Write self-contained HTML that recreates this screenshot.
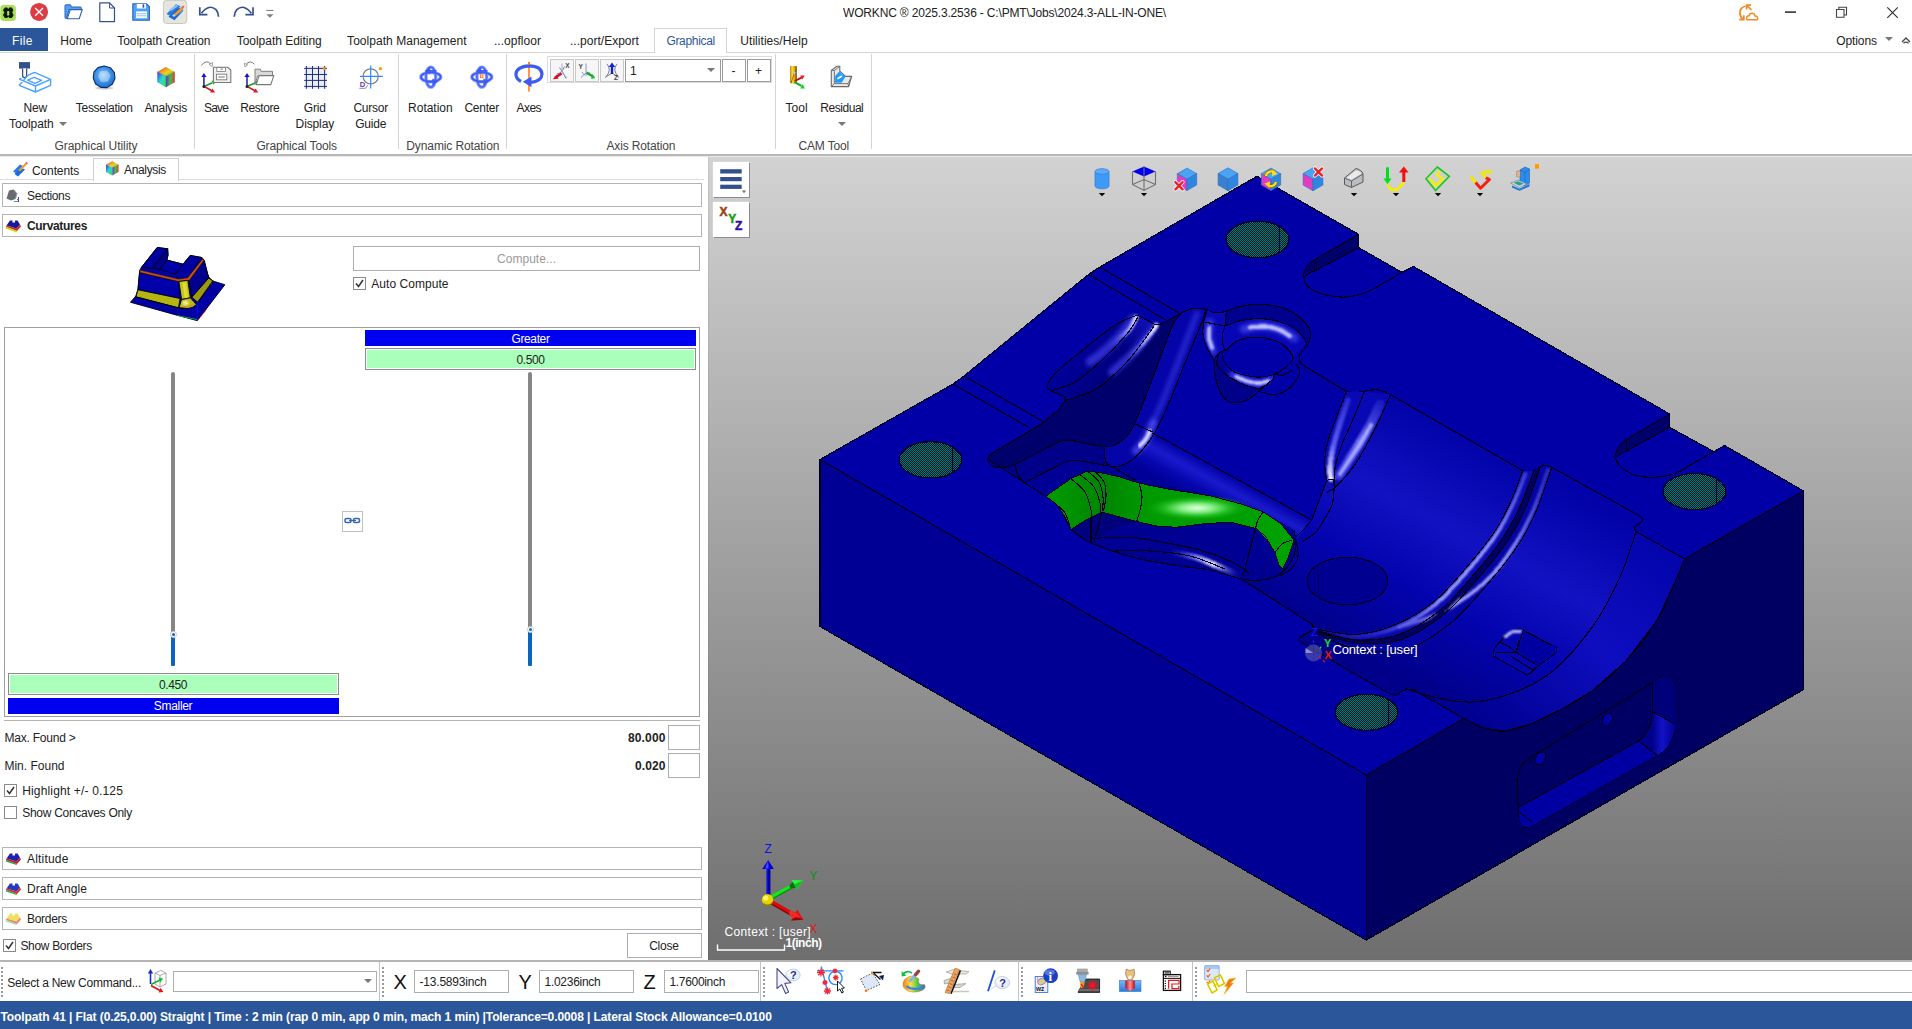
<!DOCTYPE html>
<html><head><meta charset="utf-8"><title>WORKNC</title><style>html,body{margin:0;padding:0}body{width:1912px;height:1029px;overflow:hidden;background:#fff;position:relative;font-family:"Liberation Sans",sans-serif}
.t{position:absolute;white-space:pre;font-family:"Liberation Sans",sans-serif}
.tri{position:absolute;width:0;height:0;border-left:4px solid transparent;border-right:4px solid transparent;border-top:4px solid #777}
svg{position:absolute;overflow:visible}</style></head><body>
<!-- parts.view -->
<div style="position:absolute;left:708px;top:157px;width:1204px;height:803px;background:linear-gradient(#d2d2d2,#6e6e6e)"></div>
<svg style="left:0;top:0" width="1912" height="1029" viewBox="0 0 1912 1029" shape-rendering="crispEdges">
<defs>
<pattern id="hatch" width="2" height="2" patternUnits="userSpaceOnUse"><rect width="2" height="2" fill="#000098"/><rect width="1" height="1" fill="#009000"/><rect x="1" y="1" width="1" height="1" fill="#009000"/></pattern>
<linearGradient id="gcav" gradientUnits="userSpaceOnUse" x1="1385" y1="668" x2="1503" y2="452"><stop offset="0" stop-color="#00008a"/><stop offset="0.35" stop-color="#0404b0"/><stop offset="0.62" stop-color="#1212c2"/><stop offset="1" stop-color="#0202a8"/></linearGradient>
<linearGradient id="gband" gradientUnits="userSpaceOnUse" x1="1500" y1="740" x2="1680" y2="540"><stop offset="0" stop-color="#000090"/><stop offset="0.5" stop-color="#0e0ec0"/><stop offset="1" stop-color="#0303aa"/></linearGradient>
<radialGradient id="ggreen" gradientUnits="userSpaceOnUse" cx="1197" cy="508" r="52" gradientTransform="translate(1197 508) scale(1 0.25) translate(-1197 -508)"><stop offset="0" stop-color="#e4ffe4"/><stop offset="0.3" stop-color="#8af08a"/><stop offset="0.6" stop-color="#28c028"/><stop offset="1" stop-color="#00a000" stop-opacity="0"/></radialGradient>
<linearGradient id="hl1" gradientUnits="userSpaceOnUse" x1="1347" y1="398" x2="1330" y2="478"><stop offset="0" stop-color="#2a2ad0"/><stop offset="0.6" stop-color="#5c5cf0"/><stop offset="1" stop-color="#e8e8ff"/></linearGradient>
<linearGradient id="hl2" gradientUnits="userSpaceOnUse" x1="1379" y1="402" x2="1338" y2="474"><stop offset="0" stop-color="#1c1cc4"/><stop offset="0.55" stop-color="#6868f8"/><stop offset="1" stop-color="#3a3ae0"/></linearGradient>
<linearGradient id="gsp" gradientUnits="userSpaceOnUse" x1="1070" y1="350" x2="1110" y2="385"><stop offset="0" stop-color="#0000a0"/><stop offset="0.5" stop-color="#00008c"/><stop offset="1" stop-color="#000078"/></linearGradient>
<linearGradient id="hl3" gradientUnits="userSpaceOnUse" x1="1145" y1="318" x2="1115" y2="355"><stop offset="0" stop-color="#e8e8ff"/><stop offset="0.45" stop-color="#8c8cff"/><stop offset="1" stop-color="#2020c8" stop-opacity="0.1"/></linearGradient>
<linearGradient id="hl4" gradientUnits="userSpaceOnUse" x1="1168" y1="552" x2="1240" y2="576"><stop offset="0" stop-color="#2020c8" stop-opacity="0"/><stop offset="0.35" stop-color="#7070f0"/><stop offset="0.62" stop-color="#e0e0ff"/><stop offset="1" stop-color="#3030d0" stop-opacity="0"/></linearGradient>
<linearGradient id="gshade" gradientUnits="userSpaceOnUse" x1="1050" y1="0" x2="1295" y2="0"><stop offset="0" stop-color="#000" stop-opacity="0.05"/><stop offset="0.22" stop-color="#000" stop-opacity="0.18"/><stop offset="0.4" stop-color="#000" stop-opacity="0.05"/><stop offset="1" stop-color="#000" stop-opacity="0"/></linearGradient>
<filter id="b1" x="-20%" y="-20%" width="140%" height="140%"><feGaussianBlur stdDeviation="1.1"/></filter>
<filter id="b2" x="-20%" y="-20%" width="140%" height="140%"><feGaussianBlur stdDeviation="2"/></filter>
<linearGradient id="gpk" gradientUnits="userSpaceOnUse" x1="1652" y1="0" x2="1675" y2="0"><stop offset="0" stop-color="#000088"/><stop offset="0.45" stop-color="#1212c8"/><stop offset="1" stop-color="#00008c"/></linearGradient>
<linearGradient id="gramp" gradientUnits="userSpaceOnUse" x1="1232" y1="476" x2="1214" y2="509"><stop offset="0" stop-color="#0000a6"/><stop offset="0.35" stop-color="#1a1acc"/><stop offset="0.7" stop-color="#0606ae"/><stop offset="1" stop-color="#000098"/></linearGradient>
<linearGradient id="gstrip" gradientUnits="userSpaceOnUse" x1="1148" y1="320" x2="1128" y2="350"><stop offset="0" stop-color="#1616cc" stop-opacity=".7"/><stop offset="1" stop-color="#1616cc" stop-opacity="0"/></linearGradient>
<linearGradient id="hlg" gradientUnits="userSpaceOnUse" x1="1535" y1="470" x2="1340" y2="640"><stop offset="0" stop-color="#8080ff" stop-opacity=".35"/><stop offset="0.3" stop-color="#a0a0ff" stop-opacity=".95"/><stop offset="0.6" stop-color="#a8a8ff" stop-opacity=".95"/><stop offset="0.85" stop-color="#7070f0" stop-opacity=".4"/><stop offset="1" stop-color="#5050e0" stop-opacity=".1"/></linearGradient>
<clipPath id="ringclip"><path d="M1203 311 L1226 311 Q1258 300 1300 317 L1311 335 L1307 345 L1293 357 Q1286 343 1259 337 Q1238 340 1227 350 L1222 352 L1222 360 L1232 370 L1259 377 L1274 374 V379 L1260 389 L1245 386 L1229 378 L1214 360 L1203 335Z"/></clipPath>
</defs>
<polygon points="820.0,459.5 953.0,384.0 964.0,376.0 1088.6,274.4 1099.7,267.1 1257.0,176.2 1358.7,234.4 1358.7,247.6 1402.0,272.4 1413.3,266.4 1669.6,414.0 1669.6,427.3 1713.8,451.6 1724.5,445.5 1803.6,491.0 1684.5,558.8 1676.4,579.0 1657.4,620.0 1626.0,661.0 1592.0,691.0 1563.0,708.5 1531.0,724.0 1505.0,731.0 1484.0,728.3 1463.7,718.6 1366.3,775.0" fill="#0000a6"/>
<polygon points="820.0,459.5 1366.3,775.0 1366.3,940.0 820.0,626.5" fill="#000095"/>
<polygon points="1366.3,775.0 1463.7,718.6 1484.0,728.3 1505.0,731.0 1531.0,724.0 1563.0,708.5 1592.0,691.0 1626.0,661.0 1657.4,620.0 1676.4,579.0 1684.5,558.8 1803.6,491.0 1803.6,689.5 1366.3,940.0" fill="#000062"/>
<polygon points="1346.7,391.4 1366.0,390.4 1390.4,394.7 1522.6,470.6 1533.7,471.0 1540.1,467.0 1546.0,465.3 1551.8,467.3 1640.0,516.2 1642.0,520.0 1634.0,527.0 1636.0,531.8 1685.0,559.0 1684.5,558.8 1676.4,579.0 1657.4,620.0 1626.0,661.0 1592.0,691.0 1563.0,708.5 1531.0,724.0 1505.0,731.0 1484.0,728.3 1463.7,718.6 1414.0,689.8 1406.4,689.8 1398.0,694.0 1390.8,694.3 1334.4,662.2 1306.0,645.0 1299.0,640.0 1302.4,635.6 1312.0,630.3 1313.0,625.0 1230.7,575.2 1135.0,460.8 1152.5,435.5 1311.7,520.0 1326.7,480.7 1324.6,461.6 1328.0,441.2 1336.2,418.1" fill="url(#gcav)"/>
<polygon points="1152.5,433.0 1311.7,520.0 1296.0,540.0 1280.8,523.6 1263.3,511.9 1241.9,504.2 1212.7,496.4 1169.5,489.4 1139.2,483.1 1117.7,466.6 1131.6,460.3 1144.3,447.7" fill="url(#gramp)"/>
<path d="M1636.0 531.8 C1633.3 539.3 1627.2 561.3 1620.0 577.0 C1612.8 592.7 1604.2 610.3 1593.0 626.0 C1581.8 641.7 1566.4 659.8 1553.0 671.0 C1539.6 682.2 1526.1 687.8 1512.7 693.0 C1499.3 698.2 1485.2 701.2 1472.5 702.0 C1459.8 702.8 1447.9 699.9 1436.7 697.7 C1425.5 695.5 1410.6 690.2 1405.4 688.7 L1414 689.8 L1463.7 718.6 L1463.7 718.6 C1467.1 720.2 1477.1 726.2 1484.0 728.3 C1490.9 730.4 1497.2 731.7 1505.0 731.0 C1512.8 730.3 1521.3 727.8 1531.0 724.0 C1540.7 720.2 1552.8 714.0 1563.0 708.5 C1573.2 703.0 1581.5 698.9 1592.0 691.0 C1602.5 683.1 1615.1 672.8 1626.0 661.0 C1636.9 649.2 1649.0 633.7 1657.4 620.0 C1665.8 606.3 1671.9 589.2 1676.4 579.0 C1680.9 568.8 1683.2 562.2 1684.5 558.8 L1685 559 Z" fill="url(#gband)"/>
<path d="M1636.0 531.8 C1633.3 539.3 1627.2 561.3 1620.0 577.0 C1612.8 592.7 1604.2 610.3 1593.0 626.0 C1581.8 641.7 1566.4 659.8 1553.0 671.0 C1539.6 682.2 1526.1 687.8 1512.7 693.0 C1499.3 698.2 1485.2 701.2 1472.5 702.0 C1459.8 702.8 1447.9 699.9 1436.7 697.7 C1425.5 695.5 1410.6 690.2 1405.4 688.7" stroke="#000010" stroke-width="1.1" fill="none"/>
<path d="M1463.7 718.6 C1467.1 720.2 1477.1 726.2 1484.0 728.3 C1490.9 730.4 1497.2 731.7 1505.0 731.0 C1512.8 730.3 1521.3 727.8 1531.0 724.0 C1540.7 720.2 1552.8 714.0 1563.0 708.5 C1573.2 703.0 1581.5 698.9 1592.0 691.0 C1602.5 683.1 1615.1 672.8 1626.0 661.0 C1636.9 649.2 1649.0 633.7 1657.4 620.0 C1665.8 606.3 1671.9 589.2 1676.4 579.0 C1680.9 568.8 1683.2 562.2 1684.5 558.8" stroke="#000010" stroke-width="1.1" fill="none"/>
<path d="M1305.9 366.9 L1346.7 391.4 L1346.7 391.4 C1348.1 391.6 1352.2 392.5 1355.0 392.5 C1357.8 392.5 1360.9 391.8 1363.7 391.4 C1366.5 391.0 1369.0 390.2 1372.0 390.0 C1375.0 389.8 1378.3 389.6 1381.4 390.4 C1384.5 391.2 1388.9 394.0 1390.4 394.7 L1522.6 470.6 L1522.6 470.6 C1523.5 470.8 1526.2 471.5 1528.0 471.6 C1529.8 471.7 1531.7 471.8 1533.7 471.0 C1535.7 470.2 1538.0 467.9 1540.1 467.0 C1542.1 466.1 1544.0 465.2 1546.0 465.3 C1548.0 465.4 1550.8 467.0 1551.8 467.3 L1640 516.2 L1640.0 516.2 C1640.4 516.7 1642.5 517.9 1642.5 519.0 C1642.5 520.1 1641.3 521.8 1640.0 523.0 C1638.7 524.2 1635.2 525.0 1634.5 526.5 C1633.8 528.0 1635.8 530.9 1636.0 531.8 L1685 559" stroke="#000010" stroke-width="1.1" fill="none"/>
<path d="M1334.4 662.2 L1390.8 694.3 L1390.8 694.3 C1391.8 694.4 1395.1 695.5 1397.0 695.0 C1398.9 694.5 1400.4 691.9 1402.0 691.0 C1403.6 690.1 1404.4 690.0 1406.4 689.8 C1408.4 689.6 1412.7 689.8 1414.0 689.8 L1463.7 718.6" stroke="#000010" stroke-width="1.1" fill="none"/>
<path d="M1242 579 L1313 625 L1313.0 625.0 C1312.8 625.9 1313.8 628.5 1312.0 630.3 C1310.2 632.1 1304.6 634.0 1302.4 635.6 C1300.2 637.2 1298.4 638.4 1299.0 640.0 C1299.6 641.6 1304.8 644.2 1306.0 645.0 L1334.4 662.2" stroke="#000010" stroke-width="1.1" fill="none"/>
<path d="M1346.4 391.6 C1344.7 396.0 1339.3 409.8 1336.2 418.1 C1333.1 426.4 1329.9 433.9 1328.0 441.2 C1326.1 448.4 1324.8 455.0 1324.6 461.6 C1324.4 468.2 1326.3 477.5 1326.7 480.7 L1334.1 488.8 L1334.1 488.8 C1337.6 484.7 1348.3 474.6 1355.2 464.4 C1362.1 454.2 1369.7 439.3 1375.6 427.6 C1381.5 415.9 1388.1 399.9 1390.6 394.3 L1364 392 Z" fill="#0808b4"/>
<g filter="url(#b1)"><path d="M1348.0 400.0 C1346.6 404.2 1342.1 416.7 1339.5 425.0 C1336.9 433.3 1334.1 442.8 1332.5 450.0 C1330.9 457.2 1330.2 463.2 1330.0 468.0 C1329.8 472.8 1330.8 477.2 1331.0 479.0" stroke="url(#hl1)" stroke-width="5.5" fill="none" stroke-linecap="round"/><path d="M1380.0 404.0 C1378.3 407.5 1373.5 418.3 1370.0 425.0 C1366.5 431.7 1362.7 437.9 1359.0 444.0 C1355.3 450.1 1351.3 456.3 1348.0 461.6 C1344.7 466.9 1340.5 473.6 1339.0 476.0" stroke="url(#hl2)" stroke-width="9" fill="none" stroke-linecap="round"/></g>
<g filter="url(#b1)"><path d="M1371.0 425.0 C1369.2 428.2 1363.8 437.8 1360.0 444.0 C1356.2 450.2 1351.3 457.0 1348.0 462.0 C1344.7 467.0 1341.3 472.0 1340.0 474.0" stroke="#c4c4ff" stroke-opacity=".8" stroke-width="3.4" fill="none" stroke-linecap="round"/></g>
<path d="M1346.4 391.6 C1344.7 396.0 1339.3 409.8 1336.2 418.1 C1333.1 426.4 1329.9 433.9 1328.0 441.2 C1326.1 448.4 1324.8 455.0 1324.6 461.6 C1324.4 468.2 1326.3 477.5 1326.7 480.7" stroke="#000010" stroke-width="1.1" fill="none"/><path d="M1364.1 392.2 C1362.2 397.0 1356.2 411.9 1352.5 420.8 C1348.8 429.7 1344.5 437.1 1341.6 445.3 C1338.6 453.5 1336.0 462.6 1334.8 469.8 C1333.5 477.1 1334.2 485.6 1334.1 488.8" stroke="#000010" stroke-width="1.1" fill="none"/><path d="M1390.6 394.3 C1388.1 399.9 1381.5 415.9 1375.6 427.6 C1369.7 439.3 1362.1 454.2 1355.2 464.4 C1348.3 474.6 1337.6 484.7 1334.1 488.8" stroke="#000010" stroke-width="1.1" fill="none"/>
<path d="M1326.7 480.7 L1311.7 520 M1334.1 488.8 L1334.1 488.8 C1333.8 491.5 1333.7 499.8 1332.0 505.0 C1330.3 510.2 1325.3 517.5 1324.0 520.0 M1326.7 480.7 Q1331 478 1334.5 480 M1327 493 Q1331 489 1334.1 488.8 M1334.1 469 V489" stroke="#000010" stroke-width="1.1" fill="none"/>
<path d="M1522.6 471.0 C1520.7 476.1 1515.7 491.2 1511.0 501.3 C1506.3 511.4 1501.6 521.1 1494.6 531.6 C1487.6 542.1 1479.0 552.8 1469.0 564.4 C1459.0 576.0 1446.7 591.3 1434.4 601.4 C1422.2 611.5 1408.5 619.2 1395.5 624.7 C1382.5 630.2 1369.5 633.6 1356.6 634.4 C1343.6 635.2 1324.3 630.3 1317.8 629.5 L1317.6 631.0 L1317.6 631.0 C1324.2 632.6 1343.3 639.6 1357.0 640.1 C1370.6 640.6 1385.6 639.4 1399.6 634.3 C1413.6 629.2 1428.1 620.0 1441.0 609.4 C1453.9 598.9 1466.5 583.2 1476.9 571.2 C1487.3 559.2 1496.0 548.3 1503.3 537.4 C1510.5 526.4 1515.4 516.7 1520.4 505.7 C1525.5 494.6 1531.5 476.8 1533.7 471.0 Z" fill="#0a0ab4"/>
<path d="M1533.7 471.0 C1531.5 476.8 1525.5 494.6 1520.4 505.7 C1515.4 516.7 1510.5 526.4 1503.3 537.4 C1496.0 548.3 1487.3 559.2 1476.9 571.2 C1466.5 583.2 1453.9 598.9 1441.0 609.4 C1428.1 620.0 1413.6 629.2 1399.6 634.3 C1385.6 639.4 1370.6 640.6 1357.0 640.1 C1343.3 639.6 1324.2 632.6 1317.6 631.0 L1317.5 631.9 L1317.5 631.9 C1324.1 633.8 1343.1 641.9 1357.1 643.2 C1371.2 644.4 1387.2 644.3 1401.7 639.4 C1416.3 634.5 1431.3 624.5 1444.5 613.8 C1457.8 603.0 1470.6 587.1 1481.1 574.8 C1491.7 562.6 1500.5 551.6 1507.9 540.5 C1515.3 529.3 1520.2 520.2 1525.5 508.0 C1530.9 495.8 1537.7 474.1 1540.1 467.3 Z" fill="#00007c"/>
<path d="M1540.1 467.3 C1537.7 474.1 1530.9 495.8 1525.5 508.0 C1520.2 520.2 1515.3 529.3 1507.9 540.5 C1500.5 551.6 1491.7 562.6 1481.1 574.8 C1470.6 587.1 1457.8 603.0 1444.5 613.8 C1431.3 624.5 1416.3 634.5 1401.7 639.4 C1387.2 644.3 1371.2 644.4 1357.1 643.2 C1343.1 641.9 1324.1 633.8 1317.5 631.9 L1317.3 633.5 L1317.3 633.5 C1324.0 636.1 1342.7 646.5 1357.5 649.2 C1372.3 651.9 1390.4 654.0 1406.0 649.6 C1421.7 645.1 1437.6 633.5 1451.5 622.3 C1465.4 611.0 1478.5 594.7 1489.4 582.0 C1500.4 569.4 1509.4 558.1 1517.1 546.6 C1524.8 535.0 1529.7 525.8 1535.5 512.6 C1541.3 499.4 1549.1 474.9 1551.8 467.3 Z" fill="#0404a4"/>
<g filter="url(#b1)"><path d="M1526.0 472.5 C1524.0 477.5 1518.5 492.4 1513.7 502.6 C1508.9 512.7 1504.2 522.6 1497.1 533.3 C1490.0 543.9 1481.4 554.6 1471.3 566.4 C1461.1 578.1 1448.7 593.5 1436.3 603.7 C1423.9 613.9 1409.9 622.1 1396.7 627.5 C1383.4 632.8 1369.9 635.6 1356.7 636.0 C1343.5 636.5 1324.2 631.0 1317.7 629.9" stroke="url(#hlg)" stroke-width="3.6" fill="none"/><path d="M1548.5 468.5 C1545.9 475.6 1538.4 498.6 1532.8 511.4 C1527.1 524.1 1522.2 533.4 1514.6 544.9 C1507.0 556.3 1499.1 569.0 1487.2 580.1 C1475.2 591.2 1457.7 603.7 1442.8 611.6 C1427.8 619.6 1404.9 625.1 1397.3 627.8" stroke="url(#hlg)" stroke-width="3.6" fill="none"/><path d="M1537.0 470.0 C1534.6 476.1 1528.1 495.3 1522.8 506.8 C1517.5 518.2 1512.7 527.8 1505.4 538.8 C1498.1 549.8 1489.3 560.8 1478.8 572.9 C1468.4 585.0 1455.7 600.8 1442.6 611.5 C1429.6 622.1 1414.8 631.7 1400.6 636.7 C1386.3 641.7 1370.9 642.4 1357.0 641.5 C1343.2 640.7 1324.1 633.1 1317.6 631.4" stroke="#000060" stroke-width="5" fill="none"/></g>
<path d="M1522.6 471.0 C1520.7 476.1 1515.7 491.2 1511.0 501.3 C1506.3 511.4 1501.6 521.1 1494.6 531.6 C1487.6 542.1 1479.0 552.8 1469.0 564.4 C1459.0 576.0 1446.7 591.3 1434.4 601.4 C1422.2 611.5 1408.5 619.2 1395.5 624.7 C1382.5 630.2 1369.5 633.6 1356.6 634.4 C1343.6 635.2 1324.3 630.3 1317.8 629.5" stroke="#000010" stroke-width="1.1" fill="none"/><path d="M1533.7 471.0 C1531.5 476.8 1525.5 494.6 1520.4 505.7 C1515.4 516.7 1510.5 526.4 1503.3 537.4 C1496.0 548.3 1487.3 559.2 1476.9 571.2 C1466.5 583.2 1453.9 598.9 1441.0 609.4 C1428.1 620.0 1413.6 629.2 1399.6 634.3 C1385.6 639.4 1370.6 640.6 1357.0 640.1 C1343.3 639.6 1324.2 632.6 1317.6 631.0" stroke="#000010" stroke-width="1.1" fill="none"/><path d="M1540.1 467.3 C1537.7 474.1 1530.9 495.8 1525.5 508.0 C1520.2 520.2 1515.3 529.3 1507.9 540.5 C1500.5 551.6 1491.7 562.6 1481.1 574.8 C1470.6 587.1 1457.8 603.0 1444.5 613.8 C1431.3 624.5 1416.3 634.5 1401.7 639.4 C1387.2 644.3 1371.2 644.4 1357.1 643.2 C1343.1 641.9 1324.1 633.8 1317.5 631.9" stroke="#000010" stroke-width="1.1" fill="none"/><path d="M1551.8 467.3 C1549.1 474.9 1541.3 499.4 1535.5 512.6 C1529.7 525.8 1524.8 535.0 1517.1 546.6 C1509.4 558.1 1500.4 569.4 1489.4 582.0 C1478.5 594.7 1465.4 611.0 1451.5 622.3 C1437.6 633.5 1421.7 645.1 1406.0 649.6 C1390.4 654.0 1372.3 651.9 1357.5 649.2 C1342.7 646.5 1324.0 636.1 1317.3 633.5" stroke="#000010" stroke-width="1.1" fill="none"/>
<ellipse cx="1347.5" cy="581" rx="40.5" ry="23.8" fill="#000090" stroke="#000010" stroke-width="1"/>
<path d="M1318 565 V598" stroke="#000050" stroke-width="1"/>
<path d="M1493.8 656.4 C1493.8 655.4 1492.8 652.9 1493.8 650.5 C1494.8 648.1 1497.1 644.7 1499.7 641.8 C1502.3 638.9 1505.9 635.1 1509.4 633.0 C1513.0 630.9 1518.4 629.5 1521.0 629.2 C1523.6 628.9 1524.3 630.8 1525.0 631.1 L1557 647.6 L1556 652.5 L1536.6 667.1 L1530.8 672.9 L1526.9 674.8 Z" fill="#0505ae" stroke="#000010" stroke-width="1"/>
<polygon points="1525.0,631.1 1557.0,647.6 1538.6,666.1 1516.0,652.5" fill="#0000a0"/>
<path d="M1505.0 637.0 C1506.2 636.2 1509.3 633.0 1512.0 632.0 C1514.7 631.0 1519.5 631.2 1521.0 631.0" stroke="#c0c0ff" stroke-width="3" fill="none" stroke-linecap="round" filter="url(#b1)"/>
<path d="M1523 631 L1516 652.5 L1495.5 652.5 M1516 652.5 L1509 646.5 L1500 642 M1516 652.5 L1538.6 666.1 M1511 656.5 L1533 670 M1525 631.1 L1552 645.5 M1516 652.5 L1519 640" stroke="#000010" stroke-width="1.1" fill="none"/>
<path d="M964 376 L1043 421.5 M1099.7 267.1 L1179 312.9 M1088.6 274.4 L1166.5 320.4 M953 384 L1029 427.5" stroke="#000010" stroke-width="1.1" fill="none"/>
<polygon points="1169.0,319.9 1154.4,325.7 1127.2,361.6 1096.1,388.9 1065.0,400.5 1059.1,409.3 1041.6,423.9 992.0,453.4 987.6,459.1 992.6,466.0 1005.3,467.3 1015.4,464.1 1058.3,442.0 1068.5,440.1 1103.8,446.4 1119.0,442.6 1131.0,430.6 1142.7,404.4 1154.4,373.3 1166.1,342.2 1173.8,322.8 1181.6,313.0" fill="#00006c"/>
<path d="M1136.0 315.6 C1131.6 316.9 1123.8 319.4 1115.5 324.7 C1107.2 329.9 1096.1 339.3 1086.4 347.1 C1076.7 354.9 1063.7 365.1 1057.2 371.4 C1050.7 377.7 1048.5 381.7 1047.5 385.0 C1046.5 388.3 1048.5 388.9 1051.4 391.0 C1054.3 393.1 1057.5 398.0 1065.0 397.6 C1072.5 397.2 1085.7 394.9 1096.1 388.9 C1106.5 382.9 1117.5 372.1 1127.2 361.6 C1136.9 351.1 1149.6 331.9 1154.4 325.7 C1159.2 319.5 1158.4 326.2 1156.3 324.7 C1154.2 323.2 1145.2 318.4 1141.8 316.9 C1138.4 315.4 1140.4 314.3 1136.0 315.6Z" fill="url(#gsp)"/>
<g filter="url(#b2)"><path d="M1133.0 319.0 C1131.5 321.0 1128.2 326.2 1124.0 331.0 C1119.8 335.8 1113.7 342.8 1108.0 348.0 C1102.3 353.2 1093.0 359.7 1090.0 362.0" stroke="#3a3ae0" stroke-width="9" fill="none" stroke-linecap="round" stroke-opacity=".8"/><path d="M1154.0 327.0 C1152.5 329.0 1149.0 334.2 1145.0 339.0 C1141.0 343.8 1135.5 350.5 1130.0 356.0 C1124.5 361.5 1115.0 369.3 1112.0 372.0" stroke="#3a3ae0" stroke-width="8" fill="none" stroke-linecap="round" stroke-opacity=".8"/></g>
<g filter="url(#b1)"><path d="M1136.0 317.5 C1134.8 319.6 1131.8 326.5 1129.0 330.0 C1126.2 333.5 1122.9 335.5 1119.4 338.7 C1115.9 341.9 1109.9 347.3 1108.0 349.0" stroke="url(#hl3)" stroke-width="5" fill="none" stroke-linecap="round"/><path d="M1156.5 325.5 C1154.8 327.7 1149.8 334.6 1146.5 338.7 C1143.2 342.8 1140.4 346.3 1137.0 350.0 C1133.6 353.7 1127.8 359.2 1126.0 361.0" stroke="url(#hl3)" stroke-width="4.6" fill="none" stroke-linecap="round"/></g>
<polygon points="1141.5,318.0 1154.0,325.0 1136.0,350.0 1120.0,350.0" fill="url(#gstrip)"/>
<path d="M1136.0 315.6 C1132.6 317.1 1123.8 319.4 1115.5 324.7 C1107.2 329.9 1096.1 339.3 1086.4 347.1 C1076.7 354.9 1063.7 365.1 1057.2 371.4 C1050.7 377.7 1048.5 381.7 1047.5 385.0 C1046.5 388.3 1048.5 388.9 1051.4 391.0 C1054.3 393.1 1063.7 394.6 1065.0 397.6 C1066.3 400.7 1060.1 407.4 1059.1 409.3" stroke="#000010" stroke-width="1.1" fill="none"/><path d="M1136.0 315.6 C1137.0 315.8 1138.4 315.4 1141.8 316.9 C1145.2 318.4 1151.8 324.2 1156.3 324.7 C1160.8 325.2 1166.9 320.7 1169.0 319.9" stroke="#000010" stroke-width="1.1" fill="none"/>
<path d="M1138.0 317.0 C1136.2 319.8 1133.3 326.5 1127.0 334.0 C1120.7 341.5 1108.7 354.0 1100.0 362.0 C1091.3 370.0 1083.2 377.2 1075.0 382.0 C1066.8 386.8 1055.0 389.5 1051.0 391.0" stroke="#000010" stroke-width="1.1" fill="none"/>
<path d="M1154.4 325.7 C1149.9 331.7 1136.9 351.1 1127.2 361.6 C1117.5 372.1 1106.5 382.4 1096.1 388.9 C1085.7 395.4 1070.2 398.6 1065.0 400.5" stroke="#000010" stroke-width="1.1" fill="none"/>
<polygon points="1181.6,313.0 1193.3,308.2 1205.9,309.2 1201.0,324.7 1185.5,361.6 1170.0,400.5 1156.3,429.7 1144.3,447.7 1131.6,460.3 1117.7,466.6 1108.9,465.4 1105.1,459.0 1104.5,447.7 1119.0,442.6 1131.0,430.6 1142.7,404.4 1154.4,373.3 1166.1,342.2 1173.8,322.8" fill="#0404a8"/>
<g filter="url(#b2)"><path d="M1197.0 314.0 C1194.3 320.8 1186.5 341.0 1181.0 355.0 C1175.5 369.0 1168.8 386.5 1164.0 398.0 C1159.2 409.5 1154.0 419.7 1152.0 424.0" stroke="#2a2ad4" stroke-width="6" stroke-opacity=".8" fill="none" stroke-linecap="round"/><path d="M1153.0 423.0 C1151.8 425.7 1148.8 434.3 1146.0 439.0 C1143.2 443.7 1137.7 449.0 1136.0 451.0" stroke="#5050f0" stroke-width="8" stroke-opacity=".75" fill="none" stroke-linecap="round"/></g>
<g filter="url(#b1)"><path d="M1150.0 431.0 C1149.3 432.3 1147.7 436.5 1146.0 439.0 C1144.3 441.5 1141.0 444.8 1140.0 446.0" stroke="#d0d0ff" stroke-width="4.2" fill="none" stroke-linecap="round"/></g>
<polygon points="987.6,459.1 992.6,466.0 1005.3,467.3 1015.4,464.1 1058.3,442.0 1068.5,440.1 1103.8,446.4 1105.1,459.0 1108.9,465.4 1073.5,460.3 1063.4,462.9 1024.2,482.9" fill="#000088"/>
<polygon points="1024.2,482.9 1063.4,462.9 1073.5,460.3 1108.9,466.0 1117.7,466.6 1139.2,483.1 1119.0,476.8 1097.5,472.3 1087.4,471.1 1071.0,478.6 1045.7,496.3" fill="#000096"/>
<path d="M1059.1 409.3 L1041.6 423.9 L992.0 453.4 L992.0 453.4 C991.3 454.3 987.5 457.0 987.6 459.1 C987.7 461.2 989.7 464.6 992.6 466.0 C995.5 467.4 1001.5 467.6 1005.3 467.3 C1009.1 467.0 1013.7 464.6 1015.4 464.1 L1058.3 442 L1058.3 442.0 C1060.0 441.7 1060.9 439.4 1068.5 440.1 C1076.1 440.8 1095.4 446.0 1103.8 446.4 C1112.2 446.8 1114.5 445.2 1119.0 442.6 C1123.5 440.0 1127.0 437.0 1131.0 430.6 C1135.0 424.2 1138.8 413.9 1142.7 404.4 C1146.6 394.8 1150.5 383.7 1154.4 373.3 C1158.3 362.9 1162.9 350.6 1166.1 342.2 C1169.3 333.8 1171.2 327.7 1173.8 322.8 C1176.4 317.9 1180.3 314.6 1181.6 313.0" stroke="#000010" stroke-width="1.1" fill="none"/>
<path d="M1169.0 319.9 C1171.1 318.8 1177.5 314.9 1181.6 313.0 C1185.6 311.1 1189.2 308.8 1193.3 308.2 C1197.3 307.6 1203.8 309.0 1205.9 309.2 L1205.9 309.2 C1205.1 311.8 1204.4 316.0 1201.0 324.7 C1197.6 333.4 1190.7 349.0 1185.5 361.6 C1180.3 374.2 1174.9 389.1 1170.0 400.5 C1165.1 411.9 1160.6 421.8 1156.3 429.7 C1152.0 437.6 1148.4 442.6 1144.3 447.7 C1140.2 452.8 1136.0 457.1 1131.6 460.3 C1127.2 463.5 1121.5 465.8 1117.7 466.6 C1113.9 467.5 1111.0 466.7 1108.9 465.4 C1106.8 464.1 1105.8 461.9 1105.1 459.0 C1104.4 456.1 1104.6 449.6 1104.5 447.7" stroke="#000010" stroke-width="1.1" fill="none"/>
<path d="M1135 423.9 L1152.5 432 M987.6 459.1 L1045.7 496.3 M1015.4 464.7 C1015.6 465.9 1015.8 469.4 1016.6 471.7 C1017.4 474.0 1019.1 476.7 1020.4 478.6 C1021.7 480.5 1023.6 482.2 1024.2 482.9 M1024.2 482.9 L1063.4 462.9 L1063.4 462.9 C1065.1 462.5 1065.9 459.8 1073.5 460.3 C1081.1 460.8 1102.2 464.7 1108.9 466.0 C1115.7 467.3 1109.6 465.7 1114.0 468.0 C1118.4 470.3 1131.8 478.0 1135.4 480.0 M1152.5 433 L1311.7 520" stroke="#000010" stroke-width="1.1" fill="none"/>
<path d="M1045.7 496.3 C1047.4 497.5 1053.1 500.7 1055.8 503.3 C1058.5 505.9 1059.5 507.8 1062.1 512.1 C1064.7 516.4 1068.4 525.0 1071.6 529.2 C1074.8 533.4 1077.7 535.1 1081.0 537.4 C1084.3 539.7 1087.0 541.2 1091.2 543.1 C1095.4 545.0 1101.8 547.1 1106.4 548.8 C1111.0 550.5 1112.7 551.3 1119.0 553.2 C1125.3 555.1 1134.1 557.9 1144.3 560.0 C1154.5 562.1 1169.0 564.3 1180.0 566.0 C1191.0 567.7 1199.7 567.8 1210.0 570.0 C1220.3 572.2 1233.3 577.3 1242.0 579.0 C1250.7 580.7 1255.7 580.8 1262.0 580.0 C1268.3 579.2 1275.0 577.3 1280.0 574.0 C1285.0 570.7 1289.3 564.8 1292.0 560.0 C1294.7 555.2 1295.7 550.0 1296.0 545.0 C1296.3 540.0 1294.3 532.5 1294.0 530.0 L1263 512 L1200 493 L1139 483 L1087 471 Z" fill="#000090"/>
<polygon points="1071.6,529.2 1079.8,523.5 1091.2,517.2 1101.9,512.1 1136.7,521.6 1156.9,526.0 1175.9,527.3 1208.8,523.2 1232.2,522.6 1255.5,528.5 1267.1,539.1 1274.9,552.8 1265.0,566.0 1240.0,572.0 1200.0,562.0 1144.3,556.0 1106.4,546.0 1085.0,538.0" fill="#000092"/>
<polygon points="1071.6,529.2 1079.8,523.5 1091.2,517.2 1101.9,512.1 1136.7,521.6 1110.0,530.0 1094.0,541.0 1081.0,537.4" fill="#00007c"/>
<path d="M1168.0 551.5 C1172.5 552.4 1187.3 554.8 1195.0 557.0 C1202.7 559.2 1206.5 561.3 1214.0 564.5 C1221.5 567.7 1235.7 574.1 1240.0 576.0" stroke="url(#hl4)" stroke-width="6" fill="none" stroke-linecap="round" filter="url(#b1)"/>
<path d="M1045.7 496.3 C1047.4 497.5 1053.1 500.7 1055.8 503.3 C1058.5 505.9 1059.5 507.8 1062.1 512.1 C1064.7 516.4 1068.4 525.0 1071.6 529.2 C1074.8 533.4 1077.7 535.1 1081.0 537.4 C1084.3 539.7 1087.0 541.2 1091.2 543.1 C1095.4 545.0 1101.8 547.1 1106.4 548.8 C1111.0 550.5 1112.7 551.3 1119.0 553.2 C1125.3 555.1 1134.1 557.9 1144.3 560.0 C1154.5 562.1 1169.0 564.3 1180.0 566.0 C1191.0 567.7 1199.7 567.8 1210.0 570.0 C1220.3 572.2 1233.3 577.3 1242.0 579.0 C1250.7 580.7 1255.7 580.8 1262.0 580.0 C1268.3 579.2 1275.0 577.3 1280.0 574.0 C1285.0 570.7 1289.3 564.8 1292.0 560.0 C1294.7 555.2 1295.7 550.0 1296.0 545.0 C1296.3 540.0 1294.3 532.5 1294.0 530.0" stroke="#000010" stroke-width="1.1" fill="none"/>
<path d="M1096.3 538.7 C1098.0 538.5 1100.5 537.6 1106.4 537.4 C1112.3 537.2 1123.2 536.8 1131.6 537.4 C1140.0 538.0 1145.6 539.1 1157.0 541.2 C1168.4 543.3 1187.5 546.5 1200.0 550.0 C1212.5 553.5 1223.7 558.0 1232.0 562.0 C1240.3 566.0 1247.0 572.0 1250.0 574.0" stroke="#000010" stroke-width="1.1" fill="none"/>
<path d="M1115.0 551.0 C1120.8 551.0 1137.5 550.2 1150.0 551.0 C1162.5 551.8 1177.5 553.0 1190.0 556.0 C1202.5 559.0 1219.2 566.8 1225.0 569.0" stroke="#000010" stroke-width="1.1" fill="none"/>
<path d="M1091 517 V543 M1102 512 L1094 542 M1255.5 528.5 L1243 576" stroke="#000010" stroke-width="1.1" fill="none"/>
<polygon points="1045.7,496.3 1071.0,478.6 1087.4,471.1 1097.5,472.3 1119.0,476.8 1139.2,483.1 1169.5,489.4 1212.7,496.4 1241.9,504.2 1263.3,511.9 1280.8,523.6 1294.0,540.1 1288.5,556.6 1282.7,569.3 1278.8,564.4 1274.9,552.8 1267.1,539.1 1255.5,528.5 1232.2,522.6 1208.8,523.2 1175.9,527.3 1156.9,526.0 1136.7,521.6 1101.9,512.1 1091.2,517.2 1079.8,523.5 1071.6,529.2 1068.5,523.5 1062.1,512.1 1055.8,503.3" fill="#00a200"/>
<polygon points="1045.7,496.3 1071.0,478.6 1087.4,471.1 1097.5,472.3 1119.0,476.8 1139.2,483.1 1169.5,489.4 1212.7,496.4 1241.9,504.2 1263.3,511.9 1280.8,523.6 1294.0,540.1 1288.5,556.6 1282.7,569.3 1278.8,564.4 1274.9,552.8 1267.1,539.1 1255.5,528.5 1232.2,522.6 1208.8,523.2 1175.9,527.3 1156.9,526.0 1136.7,521.6 1101.9,512.1 1091.2,517.2 1079.8,523.5 1071.6,529.2 1068.5,523.5 1062.1,512.1 1055.8,503.3" fill="url(#gshade)"/>
<ellipse cx="1197" cy="508" rx="52" ry="13" fill="url(#ggreen)"/>
<path d="M1071.0 478.6 C1073.3 480.8 1081.7 486.8 1085.0 492.0 C1088.3 497.2 1090.0 505.8 1091.0 510.0 C1092.0 514.2 1091.2 516.0 1091.2 517.2 M1080.0 474.5 C1082.3 476.6 1090.7 482.2 1094.0 487.0 C1097.3 491.8 1098.8 498.8 1100.0 503.0 C1101.2 507.2 1100.8 510.5 1101.0 512.0 M1088.0 471.5 C1089.8 473.2 1096.5 477.8 1099.0 482.0 C1101.5 486.2 1102.4 492.2 1103.0 497.0 C1103.6 501.8 1102.6 508.7 1102.5 511.0 M1096.0 472.3 C1097.3 473.9 1102.3 478.1 1104.0 482.0 C1105.7 485.9 1106.1 491.2 1106.0 496.0 C1105.9 500.8 1103.9 508.5 1103.5 511.0 M1139.2 483.1 C1139.7 485.4 1141.9 492.5 1142.0 497.0 C1142.1 501.5 1140.9 505.9 1140.0 510.0 C1139.1 514.1 1137.2 519.7 1136.7 521.6 M1263.3 511.9 C1262.4 513.2 1259.3 517.2 1258.0 520.0 C1256.7 522.8 1255.9 527.1 1255.5 528.5 M1057.0 505.0 C1058.3 506.3 1062.8 509.5 1065.0 513.0 C1067.2 516.5 1069.2 523.8 1070.0 526.0" stroke="#000010" stroke-width="1.1" fill="none"/>
<polygon points="1045.7,496.3 1071.0,478.6 1087.4,471.1 1097.5,472.3 1119.0,476.8 1139.2,483.1 1169.5,489.4 1212.7,496.4 1241.9,504.2 1263.3,511.9 1280.8,523.6 1294.0,540.1 1288.5,556.6 1282.7,569.3 1278.8,564.4 1274.9,552.8 1267.1,539.1 1255.5,528.5 1232.2,522.6 1208.8,523.2 1175.9,527.3 1156.9,526.0 1136.7,521.6 1101.9,512.1 1091.2,517.2 1079.8,523.5 1071.6,529.2 1068.5,523.5 1062.1,512.1 1055.8,503.3" fill="none" stroke="#000010" stroke-width="0.9"/>
<path d="M1274.9 552.8 C1276.1 551.3 1279.2 546.1 1282.0 544.0 C1284.8 541.9 1290.3 540.7 1292.0 540.0 M1296.0 540.0 C1296.3 542.7 1298.7 551.3 1298.0 556.0 C1297.3 560.7 1295.0 564.7 1292.0 568.0 C1289.0 571.3 1282.0 574.7 1280.0 576.0 M1311.7 520 L1311.7 520.0 C1310.4 521.5 1306.6 526.2 1304.0 529.0 C1301.4 531.8 1297.3 535.7 1296.0 537.0 M1324 520 L1324.0 520.0 C1322.7 522.0 1319.7 528.3 1316.0 532.0 C1312.3 535.7 1304.3 540.3 1302.0 542.0" stroke="#000010" stroke-width="1.1" fill="none"/>
<path d="M1226.3 311.1 C1228.8 310.3 1235.8 307.4 1241.2 306.3 C1246.6 305.2 1252.1 304.1 1258.9 304.3 C1265.7 304.5 1275.2 305.6 1282.0 307.7 C1288.8 309.8 1295.2 313.8 1299.7 317.2 C1304.2 320.6 1307.5 325.2 1309.3 328.1 C1311.1 331.1 1310.8 332.2 1310.6 334.9 C1310.4 337.6 1308.4 342.8 1307.9 344.4 L1306.5 343 L1306.5 343.0 C1305.8 341.9 1304.7 338.9 1302.4 336.3 C1300.1 333.7 1297.0 329.9 1292.9 327.4 C1288.8 324.9 1283.7 322.8 1278.0 321.3 C1272.3 319.8 1265.0 318.7 1258.9 318.6 C1252.8 318.5 1246.9 319.4 1241.2 320.6 C1235.5 321.8 1227.6 325.1 1224.9 326.0 Z" fill="#00008e"/>
<path d="M1224.9 326.0 C1227.6 325.1 1235.5 321.8 1241.2 320.6 C1246.9 319.4 1252.8 318.5 1258.9 318.6 C1265.0 318.7 1272.3 319.8 1278.0 321.3 C1283.7 322.8 1288.8 324.9 1292.9 327.4 C1297.0 329.9 1300.1 333.7 1302.4 336.3 C1304.7 338.9 1305.8 341.9 1306.5 343.0 L1292.9 356.7 L1292.9 356.7 C1291.4 354.6 1289.7 347.2 1284.0 344.0 C1278.3 340.8 1266.6 337.9 1258.9 337.3 C1251.2 336.7 1243.3 338.4 1238.0 340.5 C1232.7 342.6 1228.8 348.3 1226.9 349.9 L1224.9 350.5 L1222.2 334.9 Z" fill="#0606b4"/>
<path d="M1207.2 310.4 C1206.6 312.2 1204.5 317.2 1203.8 321.3 C1203.1 325.4 1202.6 330.6 1203.1 334.9 C1203.5 339.2 1204.7 343.0 1206.5 347.1 C1208.3 351.2 1212.8 357.3 1214.0 359.4 L1219.5 352.6 L1224.9 350.5 L1224.9 350.5 C1224.6 349.5 1223.4 347.0 1222.9 344.4 C1222.5 341.8 1221.9 338.0 1222.2 334.9 C1222.5 331.8 1224.2 330.0 1224.9 326.0 C1225.6 322.0 1226.1 313.6 1226.3 311.1 L1213.9 312.5 Z" fill="#0808b8"/>
<path d="M1214.0 359.4 C1214.2 362.3 1214.3 371.4 1215.4 377.1 C1216.5 382.8 1218.8 389.4 1220.8 393.4 C1222.8 397.4 1225.1 399.3 1227.6 400.9 C1230.1 402.5 1232.8 402.9 1235.8 402.9 C1238.8 402.9 1242.1 402.2 1245.3 400.9 C1248.5 399.5 1250.0 398.6 1254.8 394.8 C1259.6 391.1 1270.7 381.1 1273.9 378.4 L1273.9 378.4 C1271.6 380.0 1265.1 386.9 1260.3 388.0 C1255.5 389.1 1250.5 387.0 1245.3 385.2 C1240.1 383.4 1233.3 381.3 1229.0 377.1 C1224.7 372.9 1221.1 362.9 1219.5 360.0 Z" fill="#000088"/>
<path d="M1229.0 377.1 C1231.7 378.5 1240.1 383.4 1245.3 385.2 C1250.5 387.0 1255.5 389.1 1260.3 388.0 C1265.1 386.9 1271.6 380.0 1273.9 378.4 L1273.9 374.4 L1273.9 374.4 C1271.4 374.8 1264.4 377.1 1258.9 377.1 C1253.5 377.1 1245.7 375.5 1241.2 374.4 C1236.7 373.3 1233.3 371.0 1231.7 370.3 Z" fill="#0a0abc"/>
<g filter="url(#b2)" clip-path="url(#ringclip)"><path d="M1244.0 329.0 C1247.0 328.5 1256.0 325.9 1262.0 326.0 C1268.0 326.1 1274.7 327.5 1280.0 329.5 C1285.3 331.5 1291.7 336.6 1294.0 338.0" stroke="#4040ec" stroke-width="8" fill="none" stroke-linecap="round" stroke-opacity=".85"/><path d="M1210.0 322.0 C1209.8 324.7 1208.5 333.0 1209.0 338.0 C1209.5 343.0 1212.3 349.7 1213.0 352.0" stroke="#4040ec" stroke-width="7" fill="none" stroke-linecap="round" stroke-opacity=".85"/><path d="M1232.0 374.5 C1234.7 375.7 1243.0 380.0 1248.0 381.5 C1253.0 383.0 1258.0 383.8 1262.0 383.5 C1266.0 383.2 1270.3 380.2 1272.0 379.5" stroke="#4040ec" stroke-width="6" fill="none" stroke-linecap="round" stroke-opacity=".85"/></g>
<g filter="url(#b1)"><path d="M1250.0 327.5 C1252.7 327.3 1261.0 326.1 1266.0 326.5 C1271.0 326.9 1276.0 328.4 1280.0 330.0 C1284.0 331.6 1288.3 335.0 1290.0 336.0" stroke="#c0c0ff" stroke-width="4.2" fill="none" stroke-linecap="round"/><path d="M1209.5 328.0 C1209.4 329.7 1208.6 334.7 1209.0 338.0 C1209.4 341.3 1211.5 346.3 1212.0 348.0" stroke="#b8b8ff" stroke-width="4" fill="none" stroke-linecap="round"/><path d="M1236.0 376.5 C1238.0 377.3 1244.0 380.4 1248.0 381.5 C1252.0 382.6 1256.7 383.1 1260.0 383.0 C1263.3 382.9 1266.7 381.3 1268.0 381.0" stroke="#c8c8ff" stroke-width="3.6" fill="none" stroke-linecap="round"/></g>
<path d="M1226.3 311.1 C1228.8 310.3 1235.8 307.4 1241.2 306.3 C1246.6 305.2 1252.1 304.1 1258.9 304.3 C1265.7 304.5 1275.2 305.6 1282.0 307.7 C1288.8 309.8 1295.2 313.8 1299.7 317.2 C1304.2 320.6 1307.5 325.2 1309.3 328.1 C1311.1 331.1 1310.8 332.2 1310.6 334.9 C1310.4 337.6 1308.4 342.8 1307.9 344.4 L1307.9 344.4 C1306.8 345.8 1302.6 350.3 1301.1 352.6 C1299.6 354.9 1299.0 356.2 1299.0 358.0 C1299.0 359.8 1299.9 362.0 1301.1 363.5 C1302.2 365.0 1305.1 366.3 1305.9 366.9 M1224.9 326.0 C1227.6 325.1 1235.5 321.8 1241.2 320.6 C1246.9 319.4 1252.8 318.5 1258.9 318.6 C1265.0 318.7 1272.3 319.8 1278.0 321.3 C1283.7 322.8 1288.8 324.9 1292.9 327.4 C1297.0 329.9 1300.1 333.7 1302.4 336.3 C1304.7 338.9 1305.8 341.9 1306.5 343.0 M1206.4 309.4 C1207.7 309.9 1211.1 312.1 1213.9 312.5 C1216.8 312.9 1221.4 312.2 1223.5 312.0 C1225.6 311.8 1225.8 311.2 1226.3 311.1 M1207.2 310.4 C1206.6 312.2 1204.5 317.2 1203.8 321.3 C1203.1 325.4 1202.6 330.6 1203.1 334.9 C1203.5 339.2 1204.7 343.0 1206.5 347.1 C1208.3 351.2 1212.8 357.3 1214.0 359.4 M1226.3 311.1 C1226.1 313.6 1225.6 322.0 1224.9 326.0 C1224.2 330.0 1222.5 331.8 1222.2 334.9 C1221.9 338.0 1222.5 341.8 1222.9 344.4 C1223.4 347.0 1224.6 349.5 1224.9 350.5 M1214.0 359.4 C1214.2 362.3 1214.3 371.4 1215.4 377.1 C1216.5 382.8 1218.8 389.4 1220.8 393.4 C1222.8 397.4 1225.1 399.3 1227.6 400.9 C1230.1 402.5 1232.8 402.9 1235.8 402.9 C1238.8 402.9 1242.1 402.2 1245.3 400.9 C1248.5 399.5 1250.0 398.6 1254.8 394.8 C1259.6 391.1 1270.7 381.1 1273.9 378.4" stroke="#000010" stroke-width="1.1" fill="none"/>
<path d="M1204.5 322 L1224.9 326 M1214.0 359.4 C1214.9 358.3 1217.7 354.1 1219.5 352.6 C1221.3 351.1 1223.7 350.9 1224.9 350.5 C1226.1 350.1 1226.6 350.0 1226.9 349.9 M1226.9 349.9 C1228.8 348.3 1232.7 342.6 1238.0 340.5 C1243.3 338.4 1251.9 336.9 1258.9 337.3 C1265.9 337.7 1274.3 339.8 1280.0 343.0 C1285.7 346.2 1291.9 352.7 1292.9 356.7 C1293.9 360.7 1289.2 364.1 1286.0 367.0 C1282.8 369.9 1278.4 372.7 1273.9 374.4 C1269.4 376.1 1264.4 377.1 1258.9 377.1 C1253.5 377.1 1245.7 375.5 1241.2 374.4 C1236.7 373.3 1234.7 372.6 1231.7 370.3 C1228.8 368.0 1225.0 363.8 1223.5 360.7 C1222.0 357.6 1222.7 353.4 1222.5 352.0 M1229.0 377.1 C1231.7 378.5 1240.1 383.4 1245.3 385.2 C1250.5 387.0 1255.5 389.1 1260.3 388.0 C1265.1 386.9 1271.6 380.0 1273.9 378.4 M1273.9 374.4 V378.4 M1273.9 374.4 C1275.5 374.5 1280.5 375.7 1283.4 375.0 C1286.4 374.3 1290.2 371.1 1291.6 370.3 M1295.6 364.1 C1296.3 365.4 1299.7 368.8 1299.7 371.6 C1299.7 374.5 1297.9 378.0 1295.6 381.2 C1293.3 384.4 1289.7 388.4 1286.1 390.7 C1282.5 393.0 1278.0 394.6 1273.9 394.8 C1269.8 395.0 1263.6 392.5 1261.6 392.0 M1219.5 352.6 L1219.5 352.6 C1219.1 354.7 1215.4 360.9 1217.0 365.0 C1218.6 369.1 1227.0 375.1 1229.0 377.1" stroke="#000010" stroke-width="1.1" fill="none"/>
<polygon points="1358.7,234.4 1314.4,259.8 1307.0,266.0 1303.1,274.9 1314.4,271.1 1358.7,247.6" fill="#00006c"/>
<path d="M1358.7 234.4 L1314.4 259.8 L1314.4 259.8 C1313.2 260.8 1308.9 263.5 1307.0 266.0 C1305.1 268.5 1303.8 273.4 1303.1 274.9 L1303.1 274.9 C1303.6 276.5 1304.3 281.8 1306.0 284.3 C1307.7 286.8 1309.9 288.3 1313.0 290.0 C1316.1 291.7 1319.7 293.4 1324.8 294.6 C1329.9 295.8 1337.3 297.2 1343.6 297.1 C1349.9 297.0 1357.2 295.2 1362.4 293.7 C1367.6 292.2 1372.9 288.9 1375.0 288.0 L1402 272.4 M1358.7 247.6 L1314.4 271.1 V259.8 M1314.4 271.1 Q1306 274 1303.5 278" stroke="#000010" stroke-width="1.1" fill="none"/>
<polygon points="1669.6,414.0 1626.4,439.4 1619.0,446.0 1614.7,456.9 1626.4,451.1 1669.6,427.3" fill="#00006c"/>
<path d="M1669.6 414 L1626.4 439.4 L1626.4 439.4 C1625.2 440.5 1621.0 443.1 1619.0 446.0 C1617.0 448.9 1615.4 455.1 1614.7 456.9 L1614.7 456.9 C1615.7 458.5 1617.0 463.6 1620.5 466.7 C1624.0 469.8 1630.2 473.6 1636.0 475.4 C1641.8 477.2 1649.0 477.6 1655.5 477.3 C1662.0 477.0 1669.8 475.2 1675.0 473.5 C1680.2 471.8 1685.0 468.1 1687.0 467.0 L1713.8 451.6 M1669.6 427.3 L1626.4 451.1 V439.4 M1626.4 451.1 Q1618 454 1615.5 459" stroke="#000010" stroke-width="1.1" fill="none"/>
<ellipse cx="1257.5" cy="239.4" rx="31.5" ry="18.3" fill="url(#hatch)" stroke="#000018" stroke-width="1.3"/><path d="M1279.5 226.6 V252.2" stroke="#000030" stroke-width="1"/>
<ellipse cx="1694.4" cy="491.5" rx="31.3" ry="18.1" fill="url(#hatch)" stroke="#000018" stroke-width="1.3"/><path d="M1716.4 478.8 V504.2" stroke="#000030" stroke-width="1"/>
<ellipse cx="930.5" cy="459.8" rx="31.3" ry="18.1" fill="url(#hatch)" stroke="#000018" stroke-width="1.3"/><path d="M952.5 447.1 V472.5" stroke="#000030" stroke-width="1"/>
<ellipse cx="1366.5" cy="712.3" rx="31.3" ry="18.1" fill="url(#hatch)" stroke="#000018" stroke-width="1.3"/><path d="M1388.5 699.6 V725.0" stroke="#000030" stroke-width="1"/>
<path d="M1518.5 817 L1517 779 L1517.0 779.0 C1517.7 776.8 1518.7 769.7 1521.0 766.0 C1523.3 762.3 1529.3 758.5 1531.0 757.0 L1652.7 682.6 L1652.7 682.6 C1654.5 681.5 1660.4 676.6 1663.8 676.3 C1667.2 676.0 1671.4 678.6 1673.2 681.0 C1675.0 683.4 1674.5 688.9 1674.8 690.5 L1674.8 731.6 L1674.8 731.6 C1673.5 734.2 1669.9 743.5 1667.0 747.4 C1664.1 751.3 1659.0 754.0 1657.4 755.3 L1531 826.4 L1531.0 826.4 C1529.7 826.5 1525.1 828.6 1523.0 827.0 C1520.9 825.4 1519.2 818.7 1518.5 817.0 Z" fill="#000064" stroke="#000010" stroke-width="1.1"/>
<path d="M1518.5 807.4 L1638.5 741 L1657.4 755.3 L1531 826.4 L1531.0 826.4 C1529.7 826.5 1525.0 828.4 1523.0 827.0 C1521.0 825.6 1519.7 819.5 1519.0 818.0 Z" fill="#0000a2"/>
<path d="M1652.7 712 V714.2 L1652.7 714.2 C1651.9 716.8 1650.4 725.5 1648.0 730.0 C1645.6 734.5 1640.1 739.2 1638.5 741.0 L1657.4 755.3 L1657.4 755.3 C1659.0 754.0 1664.1 751.3 1667.0 747.4 C1669.9 743.5 1673.5 734.2 1674.8 731.6 L1674.8 724 Z" fill="url(#gpk)"/>
<path d="M1652.7 682.6 V712 L1674.8 724 V690.5 L1674.8 690.5 C1674.5 688.9 1675.0 683.4 1673.2 681.0 C1671.4 678.6 1667.2 676.0 1663.8 676.3 C1660.4 676.6 1654.5 681.5 1652.7 682.6 Z" fill="#00007a"/>
<path d="M1652.7 682.6 V714.2 L1652.7 714.2 C1651.9 716.8 1650.4 725.5 1648.0 730.0 C1645.6 734.5 1640.1 739.2 1638.5 741.0 L1518.5 807.4 M1638.5 741 L1657.4 755.3 M1652.7 712 L1674.8 724 M1519.5 812 L1532 822" stroke="#000010" stroke-width="1.1" fill="none"/>
<ellipse cx="1540.5" cy="758.4" rx="4.6" ry="6.6" transform="rotate(28 1540.5 758.4)" fill="#0000a8" stroke="#000010" stroke-width="1"/>
<ellipse cx="1607.2" cy="719.6" rx="4.6" ry="6.6" transform="rotate(28 1607.2 719.6)" fill="#0000a8" stroke="#000010" stroke-width="1"/>
<polygon points="820.0,459.5 953.0,384.0 964.0,376.0 1088.6,274.4 1099.7,267.1 1257.0,176.2 1358.7,234.4 1358.7,247.6 1402.0,272.4 1413.3,266.4 1669.6,414.0 1669.6,427.3 1713.8,451.6 1724.5,445.5 1803.6,491.0 1684.5,558.8 1676.4,579.0 1657.4,620.0 1626.0,661.0 1592.0,691.0 1563.0,708.5 1531.0,724.0 1505.0,731.0 1484.0,728.3 1463.7,718.6 1366.3,775.0" fill="none" stroke="#00001e" stroke-width="1.2"/>
<polygon points="820.0,459.5 1366.3,775.0 1366.3,940.0 820.0,626.5" fill="none" stroke="#00001e" stroke-width="1.2"/>
<path d="M1366.3 940 L1803.6 689.5 V491" fill="none" stroke="#00001e" stroke-width="1.2"/>
</svg>
<!-- parts.top -->
<span class="t" style="left:843.0px;top:5.0px;font-size:12px;line-height:16px;color:#222;letter-spacing:-0.163px;">WORKNC ® 2025.3.2536 - C:\PMT\Jobs\2024.3-ALL-IN-ONE\</span>
<div style="position:absolute;left:0;top:28px;width:48px;height:23px;background:#2b579a"></div>
<span class="t" style="left:11.9px;top:32.5px;font-size:12px;line-height:16px;color:#fff;letter-spacing:0.416px;">File</span>
<span class="t" style="left:60.3px;top:32.5px;font-size:12px;line-height:16px;color:#222;letter-spacing:-0.077px;">Home</span>
<span class="t" style="left:117.2px;top:32.5px;font-size:12px;line-height:16px;color:#222;letter-spacing:-0.045px;">Toolpath Creation</span>
<span class="t" style="left:236.7px;top:32.5px;font-size:12px;line-height:16px;color:#222;letter-spacing:-0.025px;">Toolpath Editing</span>
<span class="t" style="left:347.1px;top:32.5px;font-size:12px;line-height:16px;color:#222;letter-spacing:0.040px;">Toolpath Management</span>
<span class="t" style="left:494.0px;top:32.5px;font-size:12px;line-height:16px;color:#222;letter-spacing:0.031px;">...opfloor</span>
<span class="t" style="left:570.0px;top:32.5px;font-size:12px;line-height:16px;color:#222;letter-spacing:0.015px;">...port/Export</span>
<div style="position:absolute;left:654px;top:28px;width:73px;height:25px;background:#fff;border:1px solid #d4d4d4;border-bottom:none;box-sizing:border-box"></div>
<span class="t" style="left:666.4px;top:32.5px;font-size:12px;line-height:16px;color:#2b579a;letter-spacing:-0.317px;">Graphical</span>
<span class="t" style="left:740.3px;top:32.5px;font-size:12px;line-height:16px;color:#222;letter-spacing:0.044px;">Utilities/Help</span>
<span class="t" style="left:1836.3px;top:32.5px;font-size:12px;line-height:16px;color:#222;letter-spacing:-0.108px;">Options</span>
<div class="tri" style="left:1885px;top:37px;border-top-color:#777"></div>
<svg style="position:absolute;left:1900px;top:35px" width="12" height="10"><path d="M2 7 L6 3 L10 7 M3.5 8.2 Q6 6 8.5 8.2" stroke="#444" stroke-width="1.3" fill="none"/></svg>
<div style="position:absolute;left:0;top:52px;width:654px;height:1px;background:#d4d4d4"></div>
<div style="position:absolute;left:727px;top:52px;width:1185px;height:1px;background:#d4d4d4"></div>
<div style="position:absolute;left:194px;top:54px;width:1px;height:95px;background:#d4d4d4"></div>
<div style="position:absolute;left:398px;top:54px;width:1px;height:95px;background:#d4d4d4"></div>
<div style="position:absolute;left:506px;top:54px;width:1px;height:95px;background:#d4d4d4"></div>
<div style="position:absolute;left:775px;top:54px;width:1px;height:95px;background:#d4d4d4"></div>
<div style="position:absolute;left:871px;top:54px;width:1px;height:95px;background:#d4d4d4"></div>
<div style="position:absolute;left:0;top:154px;width:1912px;height:2px;background:#b8b8b8"></div>
<div style="position:absolute;left:0;top:156px;width:1912px;height:1px;background:#e8e8e8"></div>
<span class="t" style="left:23.5px;top:99.8px;font-size:12px;line-height:16px;color:#222;letter-spacing:-0.169px;">New</span>
<span class="t" style="left:9.0px;top:115.8px;font-size:12px;line-height:16px;color:#222;letter-spacing:-0.109px;">Toolpath</span>
<div class="tri" style="left:58.5px;top:122px;border-top-color:#777"></div>
<span class="t" style="left:75.8px;top:99.8px;font-size:12px;line-height:16px;color:#222;letter-spacing:-0.294px;">Tesselation</span>
<span class="t" style="left:144.4px;top:99.8px;font-size:12px;line-height:16px;color:#222;letter-spacing:-0.273px;">Analysis</span>
<span class="t" style="left:54.5px;top:137.7px;font-size:12px;line-height:16px;color:#444;letter-spacing:-0.060px;">Graphical Utility</span>
<span class="t" style="left:204.1px;top:99.8px;font-size:12px;line-height:16px;color:#222;letter-spacing:-0.838px;">Save</span>
<span class="t" style="left:240.2px;top:99.8px;font-size:12px;line-height:16px;color:#222;letter-spacing:-0.431px;">Restore</span>
<span class="t" style="left:303.8px;top:99.8px;font-size:12px;line-height:16px;color:#222;letter-spacing:-0.167px;">Grid</span>
<span class="t" style="left:295.6px;top:115.8px;font-size:12px;line-height:16px;color:#222;letter-spacing:-0.121px;">Display</span>
<span class="t" style="left:353.4px;top:99.8px;font-size:12px;line-height:16px;color:#222;letter-spacing:-0.251px;">Cursor</span>
<span class="t" style="left:355.2px;top:115.8px;font-size:12px;line-height:16px;color:#222;letter-spacing:-0.204px;">Guide</span>
<span class="t" style="left:256.4px;top:137.7px;font-size:12px;line-height:16px;color:#444;letter-spacing:-0.133px;">Graphical Tools</span>
<span class="t" style="left:408.1px;top:99.8px;font-size:12px;line-height:16px;color:#222;letter-spacing:-0.024px;">Rotation</span>
<span class="t" style="left:464.4px;top:99.8px;font-size:12px;line-height:16px;color:#222;letter-spacing:-0.253px;">Center</span>
<span class="t" style="left:406.3px;top:137.7px;font-size:12px;line-height:16px;color:#444;letter-spacing:-0.107px;">Dynamic Rotation</span>
<span class="t" style="left:516.5px;top:99.8px;font-size:12px;line-height:16px;color:#222;letter-spacing:-0.544px;">Axes</span>
<span class="t" style="left:606.4px;top:137.7px;font-size:12px;line-height:16px;color:#444;letter-spacing:-0.131px;">Axis Rotation</span>
<span class="t" style="left:785.6px;top:99.8px;font-size:12px;line-height:16px;color:#222;">Tool</span>
<span class="t" style="left:820.3px;top:99.8px;font-size:12px;line-height:16px;color:#222;letter-spacing:-0.462px;">Residual</span>
<div class="tri" style="left:838px;top:122px;border-top-color:#777"></div>
<span class="t" style="left:798.5px;top:137.7px;font-size:12px;line-height:16px;color:#444;letter-spacing:-0.162px;">CAM Tool</span>
<div style="position:absolute;left:547px;top:56px;width:225px;height:27px;border:1px solid #dcdcdc;box-sizing:border-box;background:#fff"></div>
<div style="position:absolute;left:550px;top:58.5px;width:23.5px;height:23px;border:1px solid #c8c8c8;box-sizing:border-box;background:#f6f6f6"></div>
<div style="position:absolute;left:575px;top:58.5px;width:23.5px;height:23px;border:1px solid #c8c8c8;box-sizing:border-box;background:#f6f6f6"></div>
<div style="position:absolute;left:600px;top:58.5px;width:23.5px;height:23px;border:1px solid #c8c8c8;box-sizing:border-box;background:#f6f6f6"></div>
<div style="position:absolute;left:625px;top:58.5px;width:96px;height:23px;border:1px solid #9a9a9a;box-sizing:border-box;background:#fff"></div>
<span class="t" style="left:630.0px;top:62.5px;font-size:12px;line-height:16px;color:#222;">1</span>
<div class="tri" style="left:707px;top:68px;border-top-color:#777"></div>
<div style="position:absolute;left:722px;top:58.5px;width:23.5px;height:23px;border:1px solid #9a9a9a;box-sizing:border-box;background:#fff"></div>
<div style="position:absolute;left:747px;top:58.5px;width:24px;height:23px;border:1px solid #9a9a9a;box-sizing:border-box;background:#fff"></div>
<span class="t" style="left:731.5px;top:62.5px;font-size:12px;line-height:16px;color:#222;">-</span>
<span class="t" style="left:755.0px;top:62.5px;font-size:12px;line-height:16px;color:#222;">+</span>
<!-- parts.left -->
<div style="position:absolute;left:0;top:179px;width:704px;height:1px;background:#dcdcdc"></div>
<div style="position:absolute;left:92.5px;top:157.5px;width:86px;height:23px;border:1px solid #cfcfcf;border-bottom:none;background:#fff;box-sizing:border-box"></div>
<span class="t" style="left:32.0px;top:162.5px;font-size:12px;line-height:16px;color:#222;letter-spacing:-0.129px;">Contents</span>
<span class="t" style="left:124.0px;top:161.5px;font-size:12px;line-height:16px;color:#222;letter-spacing:-0.335px;">Analysis</span>
<div style="position:absolute;left:2px;top:183px;width:700px;height:23.5px;border:1px solid #b4b4b4;background:#fff;box-sizing:border-box;"></div>
<div style="position:absolute;left:2px;top:213.5px;width:700px;height:23.5px;border:1px solid #b4b4b4;background:#fff;box-sizing:border-box;"></div>
<div style="position:absolute;left:2px;top:846.5px;width:700px;height:23.5px;border:1px solid #b4b4b4;background:#fff;box-sizing:border-box;"></div>
<div style="position:absolute;left:2px;top:876.5px;width:700px;height:23.5px;border:1px solid #b4b4b4;background:#fff;box-sizing:border-box;"></div>
<div style="position:absolute;left:2px;top:906.5px;width:700px;height:23.5px;border:1px solid #b4b4b4;background:#fff;box-sizing:border-box;"></div>
<span class="t" style="left:27.0px;top:187.5px;font-size:12px;line-height:16px;color:#222;letter-spacing:-0.378px;">Sections</span>
<span class="t" style="left:27.0px;top:217.5px;font-size:12px;line-height:16px;color:#222;font-weight:bold;letter-spacing:-0.336px;">Curvatures</span>
<span class="t" style="left:27.0px;top:850.5px;font-size:12px;line-height:16px;color:#222;letter-spacing:0.184px;">Altitude</span>
<span class="t" style="left:27.0px;top:880.5px;font-size:12px;line-height:16px;color:#222;letter-spacing:0.058px;">Draft Angle</span>
<span class="t" style="left:27.0px;top:910.5px;font-size:12px;line-height:16px;color:#222;letter-spacing:-0.288px;">Borders</span>
<div style="position:absolute;left:353px;top:245.5px;width:347px;height:25.5px;border:1px solid #adadad;background:#fff;box-sizing:border-box;"></div>
<span class="t" style="left:497.0px;top:250.5px;font-size:12px;line-height:16px;color:#9a9a9a;letter-spacing:0.031px;">Compute...</span>
<div style="position:absolute;left:353px;top:276.5px;width:13px;height:13px;border:1px solid #8a8a8a;background:#fff;box-sizing:border-box"></div><svg style="position:absolute;left:353px;top:276.5px" width="13" height="13"><path d="M3 6.5 L5.5 9.5 L10 3" stroke="#333" stroke-width="1.5" fill="none"/></svg>
<span class="t" style="left:371.3px;top:276.0px;font-size:12px;line-height:16px;color:#222;letter-spacing:0.041px;">Auto Compute</span>
<div style="position:absolute;left:4px;top:326.5px;width:696px;height:390px;border:1px solid #a0a0a0;background:#fff;box-sizing:border-box;"></div>
<div style="position:absolute;left:4px;top:720px;width:696px;height:1px;background:#b4b4b4"></div>
<div style="position:absolute;left:365px;top:330px;width:331px;height:16px;background:#0000f0"></div>
<span class="t" style="left:511.5px;top:330.5px;font-size:12px;line-height:16px;color:#fff;letter-spacing:-0.383px;">Greater</span>
<div style="position:absolute;left:365px;top:348px;width:331px;height:22px;border:1px solid #8c8c8c;background:#fff;box-sizing:border-box;"></div>
<div style="position:absolute;left:367px;top:350px;width:327px;height:18px;background:#aaffbb"></div>
<span class="t" style="left:516.5px;top:351.5px;font-size:12px;line-height:16px;color:#222;letter-spacing:-0.406px;">0.500</span>
<div style="position:absolute;left:8px;top:673px;width:331px;height:22px;border:1px solid #8c8c8c;background:#fff;box-sizing:border-box;"></div>
<div style="position:absolute;left:10px;top:675px;width:327px;height:18px;background:#aaffbb"></div>
<span class="t" style="left:159.0px;top:676.5px;font-size:12px;line-height:16px;color:#222;letter-spacing:-0.406px;">0.450</span>
<div style="position:absolute;left:8px;top:697.5px;width:331px;height:16px;background:#0000f0"></div>
<span class="t" style="left:153.8px;top:697.5px;font-size:12px;line-height:16px;color:#fff;letter-spacing:-0.311px;">Smaller</span>
<div style="position:absolute;left:171px;top:372px;width:4px;height:262px;background:#868686;border-radius:2px 2px 0 0"></div>
<div style="position:absolute;left:171px;top:634px;width:4px;height:32px;background:#0a64c2;border-radius:0 0 1px 1px"></div>
<div style="position:absolute;left:169.5px;top:630.5px;width:7px;height:7px;border-radius:50%;background:#fff;border:1px solid #c8c8c8;box-sizing:border-box"></div>
<div style="position:absolute;left:171.5px;top:632.5px;width:3px;height:3px;border-radius:50%;background:#0a64c2"></div>
<div style="position:absolute;left:528px;top:372px;width:4px;height:257px;background:#868686;border-radius:2px 2px 0 0"></div>
<div style="position:absolute;left:528px;top:629px;width:4px;height:37px;background:#0a64c2;border-radius:0 0 1px 1px"></div>
<div style="position:absolute;left:526.5px;top:625.5px;width:7px;height:7px;border-radius:50%;background:#fff;border:1px solid #c8c8c8;box-sizing:border-box"></div>
<div style="position:absolute;left:528.5px;top:627.5px;width:3px;height:3px;border-radius:50%;background:#0a64c2"></div>
<div style="position:absolute;left:341.5px;top:511px;width:21.5px;height:21px;border:1px solid #c0c0c0;background:#fff;box-sizing:border-box;"></div>
<svg style="position:absolute;left:343px;top:515px" width="19" height="12"><rect x="2" y="3.5" width="6" height="4" rx="1.5" fill="none" stroke="#3a68b0" stroke-width="1.6"/><rect x="10.5" y="3.5" width="6" height="4" rx="1.5" fill="none" stroke="#3a68b0" stroke-width="1.6"/><path d="M6 5.5h7" stroke="#3a68b0" stroke-width="1.2"/></svg>
<span class="t" style="left:4.4px;top:730.0px;font-size:12px;line-height:16px;color:#222;letter-spacing:-0.217px;">Max. Found &gt;</span>
<span class="t" style="left:4.4px;top:758.0px;font-size:12px;line-height:16px;color:#222;letter-spacing:0.007px;">Min. Found</span>
<span class="t" style="left:628.0px;top:730.0px;font-size:12px;line-height:16px;color:#222;font-weight:bold;letter-spacing:0.133px;">80.000</span>
<span class="t" style="left:635.0px;top:758.0px;font-size:12px;line-height:16px;color:#222;font-weight:bold;letter-spacing:0.094px;">0.020</span>
<div style="position:absolute;left:668px;top:724.5px;width:32px;height:25.5px;border:1px solid #adadad;background:#fff;box-sizing:border-box;"></div>
<div style="position:absolute;left:668px;top:752.5px;width:32px;height:25.5px;border:1px solid #adadad;background:#fff;box-sizing:border-box;"></div>
<div style="position:absolute;left:4px;top:783.5px;width:13px;height:13px;border:1px solid #8a8a8a;background:#fff;box-sizing:border-box"></div><svg style="position:absolute;left:4px;top:783.5px" width="13" height="13"><path d="M3 6.5 L5.5 9.5 L10 3" stroke="#333" stroke-width="1.5" fill="none"/></svg>
<span class="t" style="left:22.2px;top:783.0px;font-size:12px;line-height:16px;color:#222;letter-spacing:0.162px;">Highlight +/- 0.125</span>
<div style="position:absolute;left:4px;top:805.5px;width:13px;height:13px;border:1px solid #8a8a8a;background:#fff;box-sizing:border-box"></div>
<span class="t" style="left:22.2px;top:805.0px;font-size:12px;line-height:16px;color:#222;letter-spacing:-0.273px;">Show Concaves Only</span>
<div style="position:absolute;left:2.5px;top:938.5px;width:13px;height:13px;border:1px solid #8a8a8a;background:#fff;box-sizing:border-box"></div><svg style="position:absolute;left:2.5px;top:938.5px" width="13" height="13"><path d="M3 6.5 L5.5 9.5 L10 3" stroke="#333" stroke-width="1.5" fill="none"/></svg>
<span class="t" style="left:20.4px;top:938.0px;font-size:12px;line-height:16px;color:#222;letter-spacing:-0.314px;">Show Borders</span>
<div style="position:absolute;left:627px;top:932.5px;width:75px;height:25px;border:1px solid #adadad;background:#fff;box-sizing:border-box;"></div>
<span class="t" style="left:649.2px;top:938.0px;font-size:12px;line-height:16px;color:#222;letter-spacing:-0.236px;">Close</span>
<div style="position:absolute;left:704px;top:157px;width:4px;height:803px;background:#fff"></div>
<div style="position:absolute;left:708px;top:157px;width:1px;height:803px;background:rgba(0,0,0,.06)"></div>
<!-- parts.bottom -->
<div style="position:absolute;left:0;top:960px;width:1912px;height:41px;background:#fff"></div>
<div style="position:absolute;left:0;top:960px;width:1912px;height:2px;background:#b4b4b4"></div>
<div style="position:absolute;left:1px;top:967px;width:2px;height:2px;background:#9a9a9a"></div><div style="position:absolute;left:1px;top:971px;width:2px;height:2px;background:#9a9a9a"></div><div style="position:absolute;left:1px;top:975px;width:2px;height:2px;background:#9a9a9a"></div><div style="position:absolute;left:1px;top:979px;width:2px;height:2px;background:#9a9a9a"></div><div style="position:absolute;left:1px;top:983px;width:2px;height:2px;background:#9a9a9a"></div><div style="position:absolute;left:1px;top:987px;width:2px;height:2px;background:#9a9a9a"></div><div style="position:absolute;left:1px;top:991px;width:2px;height:2px;background:#9a9a9a"></div><div style="position:absolute;left:1px;top:995px;width:2px;height:2px;background:#9a9a9a"></div>
<div style="position:absolute;left:382px;top:967px;width:2px;height:2px;background:#9a9a9a"></div><div style="position:absolute;left:382px;top:971px;width:2px;height:2px;background:#9a9a9a"></div><div style="position:absolute;left:382px;top:975px;width:2px;height:2px;background:#9a9a9a"></div><div style="position:absolute;left:382px;top:979px;width:2px;height:2px;background:#9a9a9a"></div><div style="position:absolute;left:382px;top:983px;width:2px;height:2px;background:#9a9a9a"></div><div style="position:absolute;left:382px;top:987px;width:2px;height:2px;background:#9a9a9a"></div><div style="position:absolute;left:382px;top:991px;width:2px;height:2px;background:#9a9a9a"></div><div style="position:absolute;left:382px;top:995px;width:2px;height:2px;background:#9a9a9a"></div>
<div style="position:absolute;left:763px;top:967px;width:2px;height:2px;background:#9a9a9a"></div><div style="position:absolute;left:763px;top:971px;width:2px;height:2px;background:#9a9a9a"></div><div style="position:absolute;left:763px;top:975px;width:2px;height:2px;background:#9a9a9a"></div><div style="position:absolute;left:763px;top:979px;width:2px;height:2px;background:#9a9a9a"></div><div style="position:absolute;left:763px;top:983px;width:2px;height:2px;background:#9a9a9a"></div><div style="position:absolute;left:763px;top:987px;width:2px;height:2px;background:#9a9a9a"></div><div style="position:absolute;left:763px;top:991px;width:2px;height:2px;background:#9a9a9a"></div><div style="position:absolute;left:763px;top:995px;width:2px;height:2px;background:#9a9a9a"></div>
<div style="position:absolute;left:1021px;top:967px;width:2px;height:2px;background:#9a9a9a"></div><div style="position:absolute;left:1021px;top:971px;width:2px;height:2px;background:#9a9a9a"></div><div style="position:absolute;left:1021px;top:975px;width:2px;height:2px;background:#9a9a9a"></div><div style="position:absolute;left:1021px;top:979px;width:2px;height:2px;background:#9a9a9a"></div><div style="position:absolute;left:1021px;top:983px;width:2px;height:2px;background:#9a9a9a"></div><div style="position:absolute;left:1021px;top:987px;width:2px;height:2px;background:#9a9a9a"></div><div style="position:absolute;left:1021px;top:991px;width:2px;height:2px;background:#9a9a9a"></div><div style="position:absolute;left:1021px;top:995px;width:2px;height:2px;background:#9a9a9a"></div>
<div style="position:absolute;left:1195px;top:967px;width:2px;height:2px;background:#9a9a9a"></div><div style="position:absolute;left:1195px;top:971px;width:2px;height:2px;background:#9a9a9a"></div><div style="position:absolute;left:1195px;top:975px;width:2px;height:2px;background:#9a9a9a"></div><div style="position:absolute;left:1195px;top:979px;width:2px;height:2px;background:#9a9a9a"></div><div style="position:absolute;left:1195px;top:983px;width:2px;height:2px;background:#9a9a9a"></div><div style="position:absolute;left:1195px;top:987px;width:2px;height:2px;background:#9a9a9a"></div><div style="position:absolute;left:1195px;top:991px;width:2px;height:2px;background:#9a9a9a"></div><div style="position:absolute;left:1195px;top:995px;width:2px;height:2px;background:#9a9a9a"></div>
<div style="position:absolute;left:378.5px;top:962px;width:1px;height:39px;background:#c4c4c4"></div>
<div style="position:absolute;left:759.5px;top:962px;width:1px;height:39px;background:#c4c4c4"></div>
<div style="position:absolute;left:1017.5px;top:962px;width:1px;height:39px;background:#c4c4c4"></div>
<div style="position:absolute;left:1191.5px;top:962px;width:1px;height:39px;background:#c4c4c4"></div>
<span class="t" style="left:7.2px;top:974.7px;font-size:12px;line-height:16px;color:#222;letter-spacing:-0.243px;">Select a New Command...</span>
<div style="position:absolute;left:173px;top:970.5px;width:204px;height:21.5px;border:1px solid #adadad;background:#fff;box-sizing:border-box;"></div>
<div class="tri" style="left:364px;top:979px;border-top-color:#777"></div>
<span class="t" style="left:393.4px;top:969.5px;font-size:20px;line-height:24px;color:#111;">X</span>
<div style="position:absolute;left:414px;top:969.5px;width:94.5px;height:23px;border:1px solid #adadad;background:#fff;box-sizing:border-box;"></div>
<span class="t" style="left:518.5px;top:969.5px;font-size:20px;line-height:24px;color:#111;">Y</span>
<div style="position:absolute;left:539.2px;top:969.5px;width:94.5px;height:23px;border:1px solid #adadad;background:#fff;box-sizing:border-box;"></div>
<span class="t" style="left:643.6px;top:969.5px;font-size:20px;line-height:24px;color:#111;">Z</span>
<div style="position:absolute;left:664.3px;top:969.5px;width:94.5px;height:23px;border:1px solid #adadad;background:#fff;box-sizing:border-box;"></div>
<span class="t" style="left:419.5px;top:974.0px;font-size:12px;line-height:16px;color:#222;letter-spacing:-0.199px;">-13.5893inch</span>
<span class="t" style="left:544.5px;top:974.0px;font-size:12px;line-height:16px;color:#222;letter-spacing:-0.272px;">1.0236inch</span>
<span class="t" style="left:669.5px;top:974.0px;font-size:12px;line-height:16px;color:#222;letter-spacing:-0.322px;">1.7600inch</span>
<div style="position:absolute;left:1245.5px;top:969.5px;width:680px;height:23px;border:1px solid #adadad;background:#fff;box-sizing:border-box;"></div>
<div style="position:absolute;left:0;top:1001px;width:1912px;height:28px;background:#2b579a"></div>
<span class="t" style="left:0.5px;top:1008.5px;font-size:12px;line-height:16px;color:#fff;font-weight:bold;letter-spacing:-0.100px;">Toolpath 41 | Flat (0.25,0.00) Straight | Time : 2 min (rap 0 min, app 0 min, mach 1 min) |Tolerance=0.0008 | Lateral Stock Allowance=0.0100</span>
<!-- parts.icons -->
<div style="position:absolute;left:712.5px;top:161.5px;width:36.5px;height:35.5px;background:#fff;box-shadow:1px 1px 0 #8c8c8c,-0.5px -0.5px 0 #dcdcdc"></div>
<div style="position:absolute;left:712.5px;top:201.5px;width:36.5px;height:35.5px;background:#fff;box-shadow:1px 1px 0 #8c8c8c,-0.5px -0.5px 0 #dcdcdc"></div>
<svg style="left:712px;top:161px" width="38" height="37" viewBox="0 0 38 37"><rect x="8.2" y="8.2" width="21.5" height="4.3" fill="#34508c"/><rect x="8.2" y="16" width="21.5" height="4.2" fill="#34508c"/><rect x="8.2" y="23.7" width="21.5" height="4.2" fill="#34508c"/><polygon points="29.8,29.6 34.2,29.6 32,32.2" fill="#777"/></svg>
<span class="t" style="left:719.6px;top:204.2px;font-size:12px;line-height:16px;color:#a04010;font-weight:bold;-webkit-text-stroke:.5px #a04010;">X</span>
<span class="t" style="left:728.2px;top:211.0px;font-size:12px;line-height:16px;color:#12a012;font-weight:bold;-webkit-text-stroke:.5px #12a012;">Y</span>
<span class="t" style="left:735.0px;top:218.3px;font-size:12px;line-height:16px;color:#3010a0;font-weight:bold;-webkit-text-stroke:.5px #3010a0;">Z</span>
<svg style="left:0;top:0" width="1912" height="1029" viewBox="0 0 1912 1029"><path d="M1095 171.5 V186 A7 2.8 0 0 0 1109 186 V171.5 Z" fill="#3d9bf7" stroke="#3a7fd6" stroke-width=".8"/><ellipse cx="1102" cy="171.5" rx="7" ry="2.8" fill="#58acfa" stroke="#3a7fd6" stroke-width=".8"/><polygon points="1098.8,192.9 1105.2,192.9 1102,196.3" fill="#000"/><polygon points="1144,166.5 1155.5,171.5 1144,176.5 1132.5,171.5" fill="#0000ee"/><path d="M1132.5 171.5 V184.5 L1144 190.5 L1155.5 184.5 V171.5 M1144 176.5 V190.5 M1132.5 184.5 L1144 179.5 L1155.5 184.5 M1144 166.5 V179.5" stroke="#707070" stroke-width="1.1" fill="none"/><polygon points="1140.8,192.9 1147.2,192.9 1144,196.3" fill="#000"/><polygon points="1187,168.048 1196.7,173.674 1187,179.3 1177.3,173.674" fill="#4aa4f4" stroke="#2a6fc0" stroke-width=".6"/><polygon points="1177.3,173.674 1187,179.3 1187,190.55200000000002 1177.3,184.92600000000002" fill="#e03cc0" stroke="#2a6fc0" stroke-width=".6"/><polygon points="1196.7,173.674 1187,179.3 1187,190.55200000000002 1196.7,184.92600000000002" fill="#2f86e0" stroke="#2a6fc0" stroke-width=".6"/><path d="M1175.4 182.1 L1182.6 189.29999999999998 M1182.6 182.1 L1175.4 189.29999999999998" stroke="#fff" stroke-width="4" stroke-linecap="round"/><path d="M1175.4 182.1 L1182.6 189.29999999999998 M1182.6 182.1 L1175.4 189.29999999999998" stroke="#e8202a" stroke-width="2.4" stroke-linecap="round"/><polygon points="1228,167.816 1237.9,173.55800000000002 1228,179.3 1218.1,173.55800000000002" fill="#4aa4f4" stroke="#2a6fc0" stroke-width=".6"/><polygon points="1218.1,173.55800000000002 1228,179.3 1228,190.78400000000002 1218.1,185.042" fill="#3a7fd0" stroke="#2a6fc0" stroke-width=".6"/><polygon points="1237.9,173.55800000000002 1228,179.3 1228,190.78400000000002 1237.9,185.042" fill="#2f86e0" stroke="#2a6fc0" stroke-width=".6"/><polygon points="1271,168.048 1280.7,173.674 1271,179.3 1261.3,173.674" fill="#4aa4f4" stroke="#2a6fc0" stroke-width=".6"/><polygon points="1261.3,173.674 1271,179.3 1271,190.55200000000002 1261.3,184.92600000000002" fill="#e03cc0" stroke="#2a6fc0" stroke-width=".6"/><polygon points="1280.7,173.674 1271,179.3 1271,190.55200000000002 1280.7,184.92600000000002" fill="#2f86e0" stroke="#2a6fc0" stroke-width=".6"/><path d="M1266 176 A5 5 0 0 1 1274 172.5 M1276 182 A5 5 0 0 1 1268 185" stroke="#8a7000" stroke-width="3.6" fill="none"/><path d="M1266 176 A5 5 0 0 1 1274 172.5 M1276 182 A5 5 0 0 1 1268 185" stroke="#ffe020" stroke-width="2.2" fill="none"/><polygon points="1272.5,169.5 1277.5,174 1272,176" fill="#ffe020"/><polygon points="1269.5,188 1264.5,183.5 1270,181.5" fill="#ffe020"/><polygon points="1313,167.816 1322.9,173.55800000000002 1313,179.3 1303.1,173.55800000000002" fill="#4aa4f4" stroke="#2a6fc0" stroke-width=".6"/><polygon points="1303.1,173.55800000000002 1313,179.3 1313,190.78400000000002 1303.1,185.042" fill="#e03cc0" stroke="#2a6fc0" stroke-width=".6"/><polygon points="1322.9,173.55800000000002 1313,179.3 1313,190.78400000000002 1322.9,185.042" fill="#2f86e0" stroke="#2a6fc0" stroke-width=".6"/><path d="M1314.9 168.4 L1322.1 175.6 M1322.1 168.4 L1314.9 175.6" stroke="#fff" stroke-width="4" stroke-linecap="round"/><path d="M1314.9 168.4 L1322.1 175.6 M1322.1 168.4 L1314.9 175.6" stroke="#e8202a" stroke-width="2.4" stroke-linecap="round"/><path d="M1344.5 178 L1356 168.5 Q1362 170 1363 174 V182 L1351.5 187.5 L1344.5 184.5 Z" fill="#b9bcc0" stroke="#5a5a5a" stroke-width="1"/><path d="M1344.5 178 L1351.5 181 L1363 174 M1351.5 181 V187.5" stroke="#5a5a5a" stroke-width=".9" fill="none"/><path d="M1346.5 177.8 L1356 170.2 Q1360 171 1361.5 173.5 L1351.5 179.8Z" fill="#e8eaec"/><polygon points="1350.8,192.9 1357.2,192.9 1354,196.3" fill="#000"/><path d="M1387.3 184.5 L1391 189.6 H1397.2 L1404 182.5" stroke="#f4f000" stroke-width="2.6" fill="none" stroke-linejoin="round"/><path d="M1387.5 167.3 V181" stroke="#00e020" stroke-width="3"/><polygon points="1383.5,178.5 1391.5,178.5 1387.5,184" fill="#00e020"/><path d="M1403.8 182 V172" stroke="#f01010" stroke-width="3"/><polygon points="1399,172.5 1408.6,172.5 1403.8,166.6" fill="#f01010"/><polygon points="1392.8,192.9 1399.2,192.9 1396,196.3" fill="#000"/><polygon points="1437.3,167 1449.3,176.3 1435.5,190.6 1426,178.8" fill="none" stroke="#18c818" stroke-width="1.6"/><path d="M1429.8 178.2 L1435.5 185.7 L1443 178.8 L1436.7 175 L1439.9 171.3" stroke="#f4f000" stroke-width="2.4" fill="none" stroke-linejoin="round"/><polygon points="1434.8,192.9 1441.2,192.9 1438,196.3" fill="#000"/><path d="M1471.2 176.9 L1475.6 182.6" stroke="#f4e800" stroke-width="2.8" stroke-linecap="round"/><path d="M1475.6 182.6 L1480.6 188.2 L1489.4 179.5 L1485.7 177.6" stroke="#f02010" stroke-width="3" fill="none" stroke-linejoin="round"/><path d="M1485.7 177.6 L1481.9 173.2 Q1484 171 1492 172" stroke="#f4e800" stroke-width="2.8" fill="none" stroke-linejoin="round"/><polygon points="1476.8,192.9 1483.2,192.9 1480,196.3" fill="#000"/><path d="M1520 170 L1525 167 L1529.5 169 V183 L1524 186 L1520 184Z" fill="#2b8df0" stroke="#1a5fb0" stroke-width=".6"/><path d="M1520 170 L1525 172.5 L1529.5 169 M1525 172.5 V186" stroke="#1a5fb0" stroke-width=".6" fill="none"/><rect x="1516.8" y="171" width="3.4" height="6" fill="#e0b090" stroke="#8a6a50" stroke-width=".4"/><path d="M1510.5 183 L1518 180 L1527 184 L1519.5 187.5Z" fill="#c8d8e0" stroke="#6a8090" stroke-width=".6"/><path d="M1513.5 182.8 L1518 181.2 L1523.8 183.8 L1519.2 185.6Z" fill="#2aa090"/><path d="M1512 185.5 L1519.5 188.8 L1529.5 184 V186.5 L1519.5 190.8 L1512 187.6Z" fill="#1c74d8"/><rect x="1535" y="164.2" width="4" height="4.5" fill="#ff9a00"/></svg>
<svg style="left:0;top:0" width="1912" height="1029" viewBox="0 0 1912 1029"><defs><linearGradient id="zb" x1="0" y1="0" x2="1" y2="0"><stop offset="0" stop-color="#2a2ae8"/><stop offset=".5" stop-color="#0000c0"/><stop offset="1" stop-color="#000088"/></linearGradient></defs><rect x="766.2" y="868" width="4.2" height="30" fill="url(#zb)"/><polygon points="762.2,869 773.8,869 768.2,860" fill="#0000d8"/><polygon points="765,868.6 768.2,860.6 768.6,868.6" fill="#4848ff"/><path d="M771 897.6 L794 885" stroke="#10e818" stroke-width="4"/><path d="M772 899 L794.5 886.6" stroke="#088c10" stroke-width="1.4"/><ellipse cx="794.6" cy="884.6" rx="3" ry="5.6" transform="rotate(62 794.6 884.6)" fill="#087010"/><polygon points="791.6,880 797.2,889.6 803.2,880.2" fill="#30f040"/><polygon points="794,884.4 797.2,889.6 803.2,880.2" fill="#10c020"/><path d="M770.5 901.4 L794 914.8" stroke="#e00808" stroke-width="4"/><path d="M769.5 903 L793 916.4" stroke="#8a0404" stroke-width="1.4"/><polygon points="797.2,909.6 791,920.4 803.4,919.8" fill="#e80c0c"/><ellipse cx="794.2" cy="915" rx="3" ry="6" transform="rotate(-60 794.2 915)" fill="#f02828"/><polygon points="791,920.4 803.4,919.8 796,917" fill="#900606"/><circle cx="767.5" cy="899.8" r="5.7" fill="#e4d400"/><circle cx="765.8" cy="898" r="2.6" fill="#fff46a"/><path d="M763.5 903.5 A5.7 5.7 0 0 0 772.5 902.5" fill="none" stroke="#8a7a00" stroke-width="1.4"/><path d="M717.5 944.5 V950 H784.5 V944.5" stroke="#fff" stroke-width="1.4" fill="none"/></svg>
<span class="t" style="left:764.5px;top:840.5px;font-size:12px;line-height:16px;color:#1010e8;">Z</span>
<span class="t" style="left:809.5px;top:867.5px;font-size:12px;line-height:16px;color:#109010;">Y</span>
<span class="t" style="left:809.3px;top:920.7px;font-size:12px;line-height:16px;color:#e01818;">X</span>
<span class="t" style="left:724.5px;top:923.5px;font-size:12px;line-height:16px;color:#fff;letter-spacing:0.321px;">Context : [user]</span>
<span class="t" style="left:785.5px;top:934.5px;font-size:12px;line-height:16px;color:#fff;font-weight:bold;letter-spacing:-0.476px;">1(inch)</span>
<svg style="left:0;top:0" width="1912" height="1029" viewBox="0 0 1912 1029"><circle cx="1313.5" cy="653" r="8.5" fill="#6a6ab8" fill-opacity=".55"/><path d="M1313.5 644.5 V661.5 M1305 653 H1322" stroke="#30308a" stroke-width=".8"/><path d="M1313.5 653 L1305.5 648 V653Z" fill="#c8c8e0" fill-opacity=".6"/><path d="M1319 657 l2 1.6 M1323 660.5 l2 1.6" stroke="#f01010" stroke-width="1.3"/><path d="M1320 648.5 l1.2 -1.8" stroke="#10e010" stroke-width="1.3"/><path d="M1313.5 643 v-2.5" stroke="#2020ff" stroke-width="1.3"/></svg>
<span class="t" style="left:1311.0px;top:624.5px;font-size:11px;line-height:15px;color:#1818ff;">Z</span>
<span class="t" style="left:1324.0px;top:636.0px;font-size:11px;line-height:15px;color:#10e010;font-weight:bold;">Y</span>
<span class="t" style="left:1324.5px;top:648.0px;font-size:11px;line-height:15px;color:#f01010;font-weight:bold;">X</span>
<span class="t" style="left:1332.5px;top:641.0px;font-size:13px;line-height:17px;color:#fff;letter-spacing:-0.197px;">Context : [user]</span>
<svg style="left:0;top:0" width="1912" height="160" viewBox="0 0 1912 160"><defs><filter id="ib" x="-20%" y="-20%" width="140%" height="140%"><feGaussianBlur stdDeviation=".45"/></filter><radialGradient id="sph" cx=".45" cy=".42" r=".6"><stop offset="0" stop-color="#b4d8fa"/><stop offset=".45" stop-color="#4a9cec"/><stop offset="1" stop-color="#1a6cc8"/></radialGradient><linearGradient id="rb1" x1="0" y1="0" x2="1" y2="1"><stop offset="0" stop-color="#3030ff"/><stop offset=".5" stop-color="#30d8d0"/><stop offset="1" stop-color="#30e030"/></linearGradient><linearGradient id="rb2" x1="0" y1="0" x2="1" y2="1"><stop offset="0" stop-color="#f03030"/><stop offset=".55" stop-color="#f0d020"/><stop offset="1" stop-color="#30d040"/></linearGradient><linearGradient id="rb3" x1="0" y1="0" x2="1" y2="0"><stop offset="0" stop-color="#7030e0"/><stop offset=".5" stop-color="#40c040"/><stop offset="1" stop-color="#f03040"/></linearGradient><linearGradient id="gold" x1="0" y1="0" x2="1" y2="0"><stop offset="0" stop-color="#c88a00"/><stop offset=".35" stop-color="#ffd83a"/><stop offset=".7" stop-color="#e0a000"/><stop offset="1" stop-color="#5a3a00"/></linearGradient></defs><rect x="0.3" y="5" width="15.6" height="16" rx="3.5" fill="#a8e05c"/><path d="M5 7.5 h2.2 l1 1.5 l1 -1.5 h2.6 l1.6 2.6 l-1.2 2.4 l1.4 2.6 l-1.6 2.9 h-2.8 l-1 -1.5 l-1 1.5 h-2.4 l-1.8 -2.9 l1.4 -2.6 l-1.4 -2.4z" fill="#10180a"/><path d="M7.4 11 h1.6 l.5 1.2 l-.5 1.2 l.5 1.2 l-.5 1 h-1.6 l-.5 -1 l.5 -1.2 l-.5 -1.2z" fill="#a8e05c"/><circle cx="39.1" cy="11.9" r="9" fill="#dc3d42"/><path d="M35.2 8 L43 15.8 M43 8 L35.2 15.8" stroke="#fff" stroke-width="1.3"/><path d="M65 5.6 Q65 4.8 66 4.8 H70.5 L71.5 7 H80.5 Q81.3 7 81.3 7.8 V9.5 H69 L66.5 18.5 H65.8 Q65 18.5 65 17.6Z" fill="#4ba3ff" stroke="#3460a8" stroke-width="1"/><path d="M67.2 18.8 L70.3 9.6 H82.3 L79.2 18.8Z" fill="#fff" stroke="#3460a8" stroke-width="1.1" stroke-linejoin="round"/><path d="M99.8 2.8 H109.6 L114.5 8 V21.6 H99.8Z" fill="#fff" stroke="#34508c" stroke-width="1.2" stroke-linejoin="round"/><path d="M109.6 2.8 V8 H114.5" fill="none" stroke="#34508c" stroke-width="1"/><path d="M132.8 3.8 H146.6 L149.4 6.6 V20.3 H132.8Z" fill="#4ba3ff" stroke="#3460a8" stroke-width="1.1" stroke-linejoin="round"/><rect x="136.8" y="3.9" width="9.2" height="4.6" fill="#fff"/><rect x="142.6" y="4.3" width="1.6" height="3.4" fill="#34508c"/><rect x="136" y="11.4" width="11" height="6.8" fill="#fff"/><path d="M136.6 13.7 H146.4 M136.6 15.8 H146.4" stroke="#8cc0f8" stroke-width="1"/><rect x="163.4" y="0.3" width="23.4" height="23.2" rx="3.2" fill="#e4e6de" stroke="#bcbcb2" stroke-width=".8"/><path d="M166.5 14 L176 4.3 L180.5 6.3 L171.5 16.5Z" fill="#2a7ae8"/><path d="M168.5 16.8 L178 7.2 L183.5 10.5 L174.5 20.2Z" fill="#1c68dc"/><path d="M169 9.5 L176.5 5 L178.5 6 L171 11Z" fill="#8cc4ff"/><path d="M171.5 15.5 L181 9.5 L183 10.8 L174 17Z" fill="#6ab0fc"/><path d="M173.8 14.2 L181.2 7.3 L183 9 L175.6 15.8Z" fill="#f0a020" stroke="#a06810" stroke-width=".4"/><path d="M181.2 7.3 L183 5.2 L184.6 6.8 L183 9Z" fill="#e86a70"/><path d="M173.8 14.2 L172.8 16.6 L175.6 15.8Z" fill="#f0d8b0"/><path d="M201.5 13.2 Q209 3.5 216 9.6 Q218.2 12 218.6 16.7" fill="none" stroke="#34508c" stroke-width="1.7"/><path d="M199.8 7.3 V14.6 H207.4" fill="none" stroke="#34508c" stroke-width="1.7"/><path d="M251.3 13.2 Q243.8 3.5 236.8 9.6 Q234.6 12 234.2 16.7" fill="none" stroke="#34508c" stroke-width="1.7"/><path d="M253 7.3 V14.6 H245.4" fill="none" stroke="#34508c" stroke-width="1.7"/><rect x="266.3" y="9.9" width="7.2" height="1.1" fill="#808080"/><polygon points="266.3,14.2 273.5,14.2 269.9,17.7" fill="#808080"/><path d="M1745.5 6 Q1739 8 1740 14 Q1740.5 17.5 1743.5 19.5 M1739.2 19.7 H1743.8 V15.3" fill="none" stroke="#f08a24" stroke-width="1.8"/><path d="M1751.5 10 L1747 5.6 M1746.6 9.5 V5.2 H1751" fill="none" stroke="#f08a24" stroke-width="1.7"/><path d="M1747.5 19.8 H1756.3 Q1758 19.8 1757.6 17.8 Q1757 15.8 1755 16 Q1754.6 13.2 1752 13.2 Q1749.6 13.2 1749.2 15.8 Q1746.8 15.6 1746.6 17.8 Q1746.4 19.8 1747.5 19.8Z" fill="none" stroke="#f08a24" stroke-width="1.5"/><rect x="1785" y="11.3" width="11" height="1.6" fill="#333"/><path d="M1836.5 9.5 H1844 V17.3 H1836.5Z M1838.8 9.5 V7.3 H1846.5 V15 H1844" fill="none" stroke="#444" stroke-width="1.1"/><path d="M1887.3 7.3 L1897.8 17.8 M1897.8 7.3 L1887.3 17.8" stroke="#333" stroke-width="1.2"/><rect x="19" y="62.1" width="11" height="6.5" fill="#34508c"/><path d="M22.6 68.6 V75.6 Q22.6 77.6 24.6 77.6 Q26.6 77.6 26.6 75.6 V68.6" fill="#fff" stroke="#34508c" stroke-width="1.3"/><path d="M19.3 79.2 L21.5 78.2 M27.8 75.4 L34.5 72.4 L50.6 79.3 V85.3 L35.5 92 L19.3 85.3Z M19.3 79.2 L35.5 86 L50.6 79.3 M35.5 86 V92 M27.6 80.2 L34.2 77.3 L41.6 80.4 L35 83.3Z" fill="none" stroke="#4ba3ff" stroke-width="1.4" stroke-linejoin="round"/><ellipse cx="104.3" cy="88.2" rx="9" ry="1.6" fill="#000" fill-opacity=".18"/><polygon points="104.1,66 110.5,67.8 114.4,72.5 115,78.5 112.3,84.3 107,87.6 100.8,87.4 95.6,84 93.2,78 94,71.8 98,67.6" fill="url(#sph)" stroke="#0c2c66" stroke-width="1.1" stroke-linejoin="round"/><polygon points="100,71.5 107,70.5 110.6,75.5 108,81.5 101,82 98.5,76.5" fill="#c8e2fc" fill-opacity=".55"/><polygon points="166,66.9 174.8,71.7 166,76.5 157.3,71.7" fill="url(#rb2)"/><polygon points="157.3,71.7 166,76.5 166,87.3 157.3,82.3" fill="url(#rb1)"/><polygon points="174.8,71.7 166,76.5 166,87.3 174.8,82.3" fill="url(#rb3)"/><path d="M166 76.5 V87.3 M157.3 71.7 L166 76.5 L174.8 71.7" stroke="#404040" stroke-opacity=".45" stroke-width=".7" fill="none"/><path d="M203.9 86.4 V76.4" stroke="#2a2aa8" stroke-width="1.6"/><polygon points="201.3,76.9 206.5,76.9 203.9,72.9" fill="#1010e0"/><path d="M203.9 86.4 L212.4 82.80000000000001" stroke="#1c9a30" stroke-width="1.6"/><polygon points="211.4,80.4 213.70000000000002,84.80000000000001 215.9,81.4" fill="#18b030"/><path d="M203.9 86.4 L211.9 90.7" stroke="#c01820" stroke-width="1.6"/><polygon points="212.5,88.4 210.1,92.4 215.1,92.4" fill="#e01820"/><circle cx="203.9" cy="86.4" r="1.5" fill="#222"/><path d="M213.4 67.3 H227.8 L230.8 70 V82.5 H213.4Z" fill="#f0f0f0" stroke="#787878" stroke-width="1.1" stroke-linejoin="round"/><rect x="216.8" y="67.6" width="8.6" height="3.9" fill="#fff" stroke="#787878" stroke-width=".8"/><rect x="220.5" y="68.5" width="2.4" height="1.4" fill="#a0a0a0"/><rect x="216.4" y="74.2" width="10.4" height="5.6" fill="#fff" stroke="#787878" stroke-width=".9"/><rect x="218.4" y="76" width="6.4" height="2" fill="#b8b8b8"/><path d="M201.3 65.5 Q206 59 211 64" fill="none" stroke="#787878" stroke-width="1"/><polygon points="209,64.3 212.6,62.6 212.2,66.6" fill="#fff" stroke="#787878" stroke-width=".7"/><path d="M247 86.4 V76.4" stroke="#2a2aa8" stroke-width="1.6"/><polygon points="244.4,76.9 249.6,76.9 247,72.9" fill="#1010e0"/><path d="M247 86.4 L255.5 82.80000000000001" stroke="#1c9a30" stroke-width="1.6"/><polygon points="254.5,80.4 256.8,84.80000000000001 259,81.4" fill="#18b030"/><path d="M247 86.4 L255 90.7" stroke="#c01820" stroke-width="1.6"/><polygon points="255.6,88.4 253.2,92.4 258.2,92.4" fill="#e01820"/><circle cx="247" cy="86.4" r="1.5" fill="#222"/><path d="M255 69.2 H260.4 L261 71.3 H272.5 V76 H257.5 L255 84.5Z" fill="#d8d8d8" stroke="#808080" stroke-width="1"/><path d="M256.2 84.6 L259.2 75.6 H273.8 L270.8 84.6Z" fill="#fff" stroke="#787878" stroke-width="1.1" stroke-linejoin="round"/><path d="M254.4 64.2 Q250 59.5 246 64.5" fill="none" stroke="#787878" stroke-width="1"/><polygon points="247.6,65 244.4,63.2 245,67" fill="#fff" stroke="#787878" stroke-width=".7"/><rect x="304.5" y="66" width="22.2" height="22.6" fill="#ececec"/><path d="M306.4 66 V88.8" stroke="#1a2f8a" stroke-width="1"/><path d="M312.5 66 V88.8" stroke="#1a2f8a" stroke-width="1"/><path d="M318.5 66 V88.8" stroke="#1a2f8a" stroke-width="1"/><path d="M324.6 66 V88.8" stroke="#1a2f8a" stroke-width="1"/><path d="M304.2 68.4 H327" stroke="#1a2f8a" stroke-width="1"/><path d="M304.2 74.5 H327" stroke="#1a2f8a" stroke-width="1"/><path d="M304.2 80.4 H327" stroke="#1a2f8a" stroke-width="1"/><path d="M304.2 86.4 H327" stroke="#1a2f8a" stroke-width="1"/><rect x="322.8" y="67.2" width="2.6" height="2.6" fill="#ff9a00"/><circle cx="370.7" cy="76.4" r="7.6" fill="none" stroke="#808080" stroke-width="1.2"/><path d="M360 76.4 H382.8 M370.7 65.5 V88.6" stroke="#2a8aff" stroke-width="1.2"/><rect x="379" y="67.3" width="2.8" height="2.7" fill="#ff9a00"/><path d="M359.3 88.3 H365.6 L367.7 85.2" fill="none" stroke="#909090" stroke-width="1"/><text x="359.8" y="87.4" font-family="Liberation Sans" font-weight="bold" font-size="7.6" fill="#7030c0">D</text><g filter="url(#ib)"><ellipse cx="430.8" cy="77.1" rx="9.9" ry="4.6" fill="none" stroke="#8ea2ff" stroke-width="3.4"/><ellipse cx="430.8" cy="77.1" rx="4.9" ry="10" fill="none" stroke="#8ea2ff" stroke-width="3.4"/></g><ellipse cx="430.8" cy="77.1" rx="9.9" ry="4.6" fill="none" stroke="#3c5cf0" stroke-width="1.7"/><ellipse cx="430.8" cy="77.1" rx="4.9" ry="10" fill="none" stroke="#3c5cf0" stroke-width="1.7" stroke-opacity=".8"/><polygon points="424.40000000000003,70.89999999999999 430.2,67.5 430.2,74.3" fill="#3c5cf0"/><path d="M429.8 70.89999999999999 H436.40000000000003" stroke="#3c5cf0" stroke-width="1.8"/><polygon points="438.2,81.69999999999999 432.40000000000003,78.5 432.40000000000003,84.89999999999999" fill="#3c5cf0"/><path d="M432.8 81.69999999999999 H426.6" stroke="#3c5cf0" stroke-width="1.8"/><g filter="url(#ib)"><ellipse cx="481.8" cy="77.1" rx="9.9" ry="4.6" fill="none" stroke="#8ea2ff" stroke-width="3.4"/><ellipse cx="481.8" cy="77.1" rx="4.9" ry="10" fill="none" stroke="#8ea2ff" stroke-width="3.4"/></g><ellipse cx="481.8" cy="77.1" rx="9.9" ry="4.6" fill="none" stroke="#3c5cf0" stroke-width="1.7"/><ellipse cx="481.8" cy="77.1" rx="4.9" ry="10" fill="none" stroke="#3c5cf0" stroke-width="1.7" stroke-opacity=".8"/><polygon points="475.40000000000003,70.89999999999999 481.2,67.5 481.2,74.3" fill="#3c5cf0"/><path d="M480.8 70.89999999999999 H487.40000000000003" stroke="#3c5cf0" stroke-width="1.8"/><polygon points="489.2,81.69999999999999 483.40000000000003,78.5 483.40000000000003,84.89999999999999" fill="#3c5cf0"/><path d="M483.8 81.69999999999999 H477.6" stroke="#3c5cf0" stroke-width="1.8"/><rect x="480.3" y="75" width="2.6" height="2.6" fill="#fff" stroke="#ff6a00" stroke-width=".9"/><path d="M529 62 V91.5" stroke="#ff7a1a" stroke-width="1.6"/><path d="M521 81.5 Q515.5 78.5 516 73.5 Q517 66.5 529 65.8 Q541.5 66 542 74 Q541.8 81 531 82.4" fill="none" stroke="#3c5cf0" stroke-width="3.2"/><polygon points="522.8,81.7 531.5,76.5 531.5,87.2" fill="#3c5cf0"/><path d="M529 62 V65" stroke="#ff7a1a" stroke-width="1.6"/><path d="M557 74 Q562 73 564.5 66.5 M559.5 67.5 Q563 72 566 78.5" fill="none" stroke="#707088" stroke-width=".9"/><path d="M555 77.8 L561.5 73.5" stroke="#d01020" stroke-width="2.4"/><polygon points="552.8,79.2 556.8,74.6 558.4,78.8" fill="#e01020"/><path d="M562 63.5 V73 L567 77.5" stroke="#9aa0e0" stroke-width=".9" fill="none"/><text x="565.2" y="68" font-family="Liberation Sans" font-weight="bold" font-size="6.5" fill="#444">X</text><path d="M582 72 Q585 78 590 72.5 M586 63.5 V73 L581 77.5" fill="none" stroke="#8088c8" stroke-width=".9"/><path d="M586.5 72.5 L593 76.6" stroke="#10a828" stroke-width="2.4"/><polygon points="595.2,78 591,79 592.6,74" fill="#10c030"/><text x="578.5" y="68.5" font-family="Liberation Sans" font-weight="bold" font-size="6.5" fill="#444">Y</text><path d="M607 64 Q612 70 606 77 M617 64 Q612 70 618 76 M612 73 L605 77.5 M612 73 L619 77.5" fill="none" stroke="#707088" stroke-width=".9"/><path d="M612 74 V66" stroke="#1020d0" stroke-width="2.4"/><polygon points="608.8,67 615.2,67 612,62.5" fill="#1020e0"/><text x="614" y="79.5" font-family="Liberation Sans" font-weight="bold" font-size="6.5" fill="#444">Z</text><rect x="790" y="66" width="6.8" height="17.4" rx=".8" fill="url(#gold)"/><path d="M791 83 L795.5 70" stroke="#5a3a00" stroke-width="1" stroke-opacity=".6"/><polygon points="794.2,70.5 795.6,72.8 794.2,75 792.9,72.8" fill="#c0c0f0"/><path d="M794.8 81 L801.5 77.6" stroke="#b01018" stroke-width="1.8"/><polygon points="800.2,75.4 804.8,75.6 802.3,79.6" fill="#f01820"/><path d="M794.5 82.2 L801.5 85.9" stroke="#10b020" stroke-width="2"/><polygon points="800.2,88.6 805,88.4 802.6,84.2" fill="#10d020"/><path d="M831.3 70.4 L836.8 66.3 H839.8 V71.2 L845.6 76.4 H851.6 L848.7 86.6 H831.3Z" fill="#e8e8e8" stroke="#6a6a6a" stroke-width="1.1" stroke-linejoin="round"/><path d="M831.3 70.4 H834.4 V83.6 H848 L851.6 76.4 M834.4 70.4 L839.8 66.3 M834.4 83.6 L831.3 86.6 M848 83.6 L848.7 86.6" fill="none" stroke="#6a6a6a" stroke-width=".9"/><path d="M835.1 75.9 L839.5 71.2 Q841.5 75 845.6 76.4 L841.6 82.7 H835.1Z" fill="#1e9bff"/><path d="M838 78.5 L841.5 76.3" stroke="#fff" stroke-width="1.6" stroke-linecap="round"/></svg>
<svg style="left:0;top:0" width="1912" height="1029" viewBox="0 0 1912 1029"><defs><linearGradient id="pal" x1="0" y1="0" x2="1" y2="0"><stop offset="0" stop-color="#f08020"/><stop offset=".35" stop-color="#f8e040"/><stop offset=".65" stop-color="#50c850"/><stop offset="1" stop-color="#3060e0"/></linearGradient><linearGradient id="redsh" x1="0" y1="0" x2="1" y2="0"><stop offset="0" stop-color="#c00818"/><stop offset=".5" stop-color="#ff9090"/><stop offset="1" stop-color="#c00818"/></linearGradient><linearGradient id="bl" x1="0" y1="0" x2="0" y2="1"><stop offset="0" stop-color="#7ab8f4"/><stop offset="1" stop-color="#2a78d8"/></linearGradient></defs><path d="M155 973 L161 970.5 L166 973 V984 L160 987 L155 984Z M155 973 L160 975.5 L166 973 M160 975.5 V987" fill="#fff" stroke="#a0a0a0" stroke-width=".9"/><path d="M150.5 984 V972" stroke="#1a2ad0" stroke-width="1.6"/><polygon points="147.8,973.5 153.2,973.5 150.5,969" fill="#1a2ad0"/><path d="M151 984.5 L160 980" stroke="#10b030" stroke-width="1.8"/><polygon points="158.5,977.6 163,978.6 160.4,982.4" fill="#10c030"/><path d="M151 985.5 L160 990.5" stroke="#d01820" stroke-width="1.8"/><polygon points="160.6,987.8 158.6,992.4 163.4,992" fill="#e01820"/><ellipse cx="793" cy="975" rx="7.2" ry="5.904" fill="#e6eefa" stroke="#b8c4dc" stroke-width=".8"/><ellipse cx="792" cy="973.5" rx="5.04" ry="3.6" fill="#fff" fill-opacity=".7"/><text x="790" y="979" font-family="Liberation Sans" font-weight="bold" font-size="11" fill="#2a2a8a">?</text><path d="M777 968.5 V988.5 L781.6 984.6 L785.6 993.4 L788.6 992 L784.8 983.4 L791 982.8Z" fill="#f4f4fc" stroke="#4a4a8a" stroke-width="1.1" stroke-linejoin="round"/><path d="M817 970.8 H843.6 M821.2 966.5 L828 993" stroke="#2a8aff" stroke-width="1.3"/><circle cx="835.5" cy="978" r="6.6" fill="none" stroke="#2a8aff" stroke-width="1.4"/><path d="M817.0 972.5 L825.0 972.5 M818.2 969.7 L823.8 975.3 M821.0 968.5 L821.0 976.5 M823.8 969.7 L818.2 975.3 " stroke="#f02838" stroke-width="1.3"/><path d="M832.6 970.8 L837.4 970.8 M833.3 969.1 L836.7 972.5 M835.0 968.4 L835.0 973.2 M836.7 969.1 L833.3 972.5 " stroke="#f02838" stroke-width="1.3"/><path d="M833.0 977.6 L838.6 977.6 M833.8 975.6 L837.8 979.6 M835.8 974.8 L835.8 980.4 M837.8 975.6 L833.8 979.6 " stroke="#f02838" stroke-width="1.3"/><path d="M822.4 982.5 L827.6 982.5 M823.2 980.7 L826.8 984.3 M825.0 979.9 L825.0 985.1 M826.8 980.7 L823.2 984.3 " stroke="#f02838" stroke-width="1.3"/><path d="M823.9 991.0 L831.1 991.0 M825.0 988.5 L830.0 993.5 M827.5 987.4 L827.5 994.6 M830.0 988.5 L825.0 993.5 " stroke="#f02838" stroke-width="1.3"/><path d="M837.5 981 V991 L839.8 989 L841.8 993 L843.4 992.2 L841.6 988.4 L844.4 988Z" fill="#fff" stroke="#000" stroke-width=".9"/><path d="M860.5 979 L872.5 973 L880 984.5 L866.5 990.5Z" fill="#dce8f8" stroke="#555" stroke-width="1" stroke-dasharray="1.6 1.4"/><rect x="871" y="971.6" width="2.6" height="2.6" fill="#f08a20"/><rect x="864.8" y="989.2" width="2.8" height="2.8" fill="#f06a10" stroke="#fff" stroke-width=".5"/><path d="M873 972.5 H881.5 M874 973.5 L880.5 979.5" stroke="#111" stroke-width="1.3"/><polygon points="879,976 884,975 883,980.5" fill="#0c1c50"/><path d="M905 979 Q912 973 919 979 Q917 985.5 924.5 984.5 Q927.5 989.5 918 991.8 Q907 993.4 903.5 987 Q901.8 982.5 905 979Z" fill="url(#pal)" stroke="#c08020" stroke-width=".5"/><path d="M906.5 986 Q912 991 923 987.5" fill="none" stroke="#3a80e8" stroke-width="2.2"/><path d="M909.5 981.5 L916.5 973.6" stroke="#8ab0e8" stroke-width="3"/><path d="M915.6 974.6 L918.6 971.2" stroke="#a04040" stroke-width="3.4" stroke-linecap="round"/><path d="M902.5 974.6 Q906.5 969.5 912 973" fill="none" stroke="#10c040" stroke-width="1.8"/><polygon points="901.6,971 901.6,976.6 906.4,975.8" fill="#10c040"/><path d="M946 972 L953 969.6 L969 971.6 L966 974 H952Z" fill="#e8e8e0" stroke="#909088" stroke-width=".6"/><path d="M944 980.5 L952 978 V982.6 L944.5 984Z M953 984.6 L966 983.6 L960 987.6 H953Z" fill="#d8d8d0" stroke="#888880" stroke-width=".6"/><path d="M955 968.2 L959.4 969.4 L949.5 993.6 L945 992.4Z" fill="#f0a060" stroke="#b06820" stroke-width=".6"/><path d="M951 993.8 L960.4 970.5" stroke="#111" stroke-width="1.6"/><path d="M947 990 l2.4 .8 M948.4 986.8 l2.4 .8 M949.8 983.6 l2.4 .8 M951.2 980.4 l2.4 .8 M952.6 977.2 l2.4 .8 M954 974 l2.4 .8" stroke="#804000" stroke-width=".6"/><path d="M953 991.5 H969" stroke="#c8c8c0" stroke-width="1.6"/><path d="M994.8 970.4 L988 991.2" stroke="#2050d8" stroke-width="1.8"/><ellipse cx="1002.3" cy="982.6" rx="7.4" ry="6.068" fill="#e6eefa" stroke="#b8c4dc" stroke-width=".8"/><ellipse cx="1001.3" cy="981.1" rx="5.18" ry="3.7" fill="#fff" fill-opacity=".7"/><text x="999.3" y="986.6" font-family="Liberation Sans" font-weight="bold" font-size="11" fill="#2a2a8a">?</text><path d="M990.5 989.5 L996 986" stroke="#c8d0e0" stroke-width=".8"/><rect x="1035.2" y="976.5" width="12.6" height="16" fill="#e8f0ff" stroke="#3a78d8" stroke-width=".9"/><path d="M1037.5 977 V981" stroke="#f0a0c0" stroke-width="1"/><ellipse cx="1041.8" cy="981.4" rx="4.2" ry="3" transform="rotate(-28 1041.8 981.4)" fill="#c8d880" stroke="#d060d0" stroke-width=".9"/><text x="1036" y="991" font-family="Liberation Sans" font-weight="bold" font-size="6.5" fill="#222">wz</text><circle cx="1050.6" cy="975.7" r="7.4" fill="#1c40c4"/><ellipse cx="1049.6" cy="972.4" rx="5" ry="2.8" fill="#7a9cf0" fill-opacity=".6"/><text x="1048.4" y="980.6" font-family="Liberation Serif" font-weight="bold" font-size="13" fill="#fff">i</text><path d="M1078 992.4 L1081 986.6 L1086 979 H1099.6 V992.4Z" fill="#4a4a4a" stroke="#111" stroke-width=".8"/><path d="M1078 990 H1099.6" stroke="#a0a0a0" stroke-width=".8"/><path d="M1087.5 985.5 L1097.5 985.5 M1089.0 982.0 L1096.0 989.0 M1092.5 980.5 L1092.5 990.5 M1096.0 982.0 L1089.0 989.0 " stroke="#ff1020" stroke-width="1.3"/><rect x="1077.6" y="969" width="9.6" height="3" fill="#b0b0b0" stroke="#808080" stroke-width=".5"/><rect x="1076.2" y="972" width="12.4" height="2.6" fill="#909090"/><path d="M1078.2 974.6 H1086.6 L1084.6 982 H1080.2Z" fill="#88b8e0" stroke="#6080a0" stroke-width=".5"/><path d="M1080.2 982 H1084.6 L1083.8 987 L1080.6 988.4Z" fill="#f0a020"/><path d="M1081 984 L1084 988" stroke="#e02020" stroke-width="1.4"/><rect x="1119.3" y="980.4" width="21.7" height="11.2" fill="url(#bl)" stroke="#3a80d8" stroke-width=".6"/><path d="M1125.4 980.6 H1134.8 V988.2 L1130.1 991 L1125.4 988.2Z" fill="url(#redsh)"/><path d="M1126 971 Q1125.2 969 1127.2 969.2 L1128.4 970.2 H1131.8 L1133 969.2 Q1135 969 1134.2 971 Q1135.4 974 1133.6 976.8 L1132 980 H1128.2 L1126.6 976.8 Q1124.8 974 1126 971Z" fill="#e8c080" stroke="#8a6020" stroke-width=".6"/><circle cx="1130" cy="977.4" r="1.8" fill="#fff8e8"/><rect x="1163.4" y="974.6" width="17.2" height="15.8" fill="#fff" stroke="#111" stroke-width="1.3"/><rect x="1163.4" y="971.2" width="6.8" height="3.4" fill="#fff" stroke="#111" stroke-width="1.2"/><rect x="1164.6" y="972.4" width="4.4" height="1.1" fill="#111"/><path d="M1163.4 978.4 H1180.6" stroke="#111" stroke-width="1"/><rect x="1165" y="975.8" width="1.4" height="1.4" fill="#111"/><rect x="1168" y="975.6" width="10.6" height="1.6" fill="#999"/><path d="M1165.4 980.5 v1.2 m0 1.2 v1.2 m0 1.2 v1.2 m0 1.2 v1.2" stroke="#111" stroke-width="1.2"/><path d="M1168.6 988.8 V980.4 H1179 V984 H1172 V988.6 H1178.8 V986" fill="none" stroke="#e81820" stroke-width="1.2"/><rect x="1204.6" y="965.6" width="14.6" height="14.4" rx="1" fill="#a8c8f4" stroke="#7aa0dc" stroke-width=".7"/><rect x="1205.2" y="969" width="13.4" height="10.4" fill="#dce8fa"/><path d="M1206.6 970 l1.4 1.6 l2.2 -3 M1206.6 975.4 l1.4 1.6 l2.2 -3 M1206.6 982 l1.4 1.6 l2.2 -3" fill="none" stroke="#f06010" stroke-width="1.2"/><path d="M1207.6 984 L1213 981 L1217 990 L1212 993Z M1214.4 977.8 L1220.5 975 L1224.4 983.6 L1218.6 986.4Z M1218 983.5 L1213.6 986" fill="none" stroke="#f0e000" stroke-width="1.7" stroke-linejoin="round"/><path d="M1207.6 984 L1213 981 L1217 990 L1212 993Z M1214.4 977.8 L1220.5 975 L1224.4 983.6 L1218.6 986.4Z" fill="none" stroke="#a08a00" stroke-width=".4"/><path d="M1229 979 L1236 978 L1230.5 983 L1233.5 983 L1224 994.5 L1227.5 986.5 L1224.5 986.5Z" fill="#f07818" stroke="#f8c020" stroke-width=".7"/></svg><svg style="left:0;top:0" width="1912" height="1029" viewBox="0 0 1912 1029"><path d="M13 171.5 L20 164.5 L23 166 L16.5 173.5Z" fill="#2a7ae8"/><path d="M14.5 174 L21 167.5 L25 169.5 L18 176.5Z" fill="#1c68dc"/><path d="M18.5 170 L25 163.2 L26.6 164.8 L20 171.4Z" fill="#f0a020"/><path d="M25 163.2 L26.4 161.6 L28 163.2 L26.6 164.8Z" fill="#e86a70"/><polygon points="112.3,161.2 118.6,164.4 112.3,167.6 106,164.4" fill="url(#rb2)"/><polygon points="106,164.4 112.3,167.6 112.3,175.4 106,172" fill="url(#rb1)"/><polygon points="118.6,164.4 112.3,167.6 112.3,175.4 118.6,172" fill="url(#rb3)"/><path d="M6.5 198.5 L9 190.5 L13.5 189.5 L17 193.5 L15.5 199 L11 200.5Z" fill="#6a6a72"/><path d="M13.5 189.5 L17 193.5 L15.5 199" fill="none" stroke="#a0a0a8" stroke-width="1"/><path d="M14 201.5 H19" stroke="#20c040" stroke-width="1"/><path d="M18.5 197 V202" stroke="#3030ff" stroke-width="1"/><path d="M17 199.5 l2 .5" stroke="#f03030" stroke-width="1"/><path d="M6.5 225.5 L10.0 220.5 H12.5 V222.5 H15.0 V220.5 H17.5 L20.0 224.5 L16.5 228.5Z" fill="#1818a0"/><path d="M6.0 227 L6.5 225.5 L16.5 228.5 L20.0 224.5 L21.0 226.5 L17.0 231Z" fill="#c03010"/><path d="M6.0 227 L17.0 231 L16.5 232 L6.0 228.4Z" fill="#d0c020"/><path d="M6 227.5 L16.5 231.5" stroke="#d8d020" stroke-width="1.6"/><path d="M6.5 858.5 L10.0 853.5 H12.5 V855.5 H15.0 V853.5 H17.5 L20.0 857.5 L16.5 861.5Z" fill="#2020b0"/><path d="M6.0 860 L6.5 858.5 L16.5 861.5 L20.0 857.5 L21.0 859.5 L17.0 864Z" fill="#c02020"/><path d="M6.0 860 L17.0 864 L16.5 865 L6.0 861.4Z" fill="#20a040"/><path d="M6.5 888.5 L10.0 883.5 H12.5 V885.5 H15.0 V883.5 H17.5 L20.0 887.5 L16.5 891.5Z" fill="#2838c0"/><path d="M6.0 890 L6.5 888.5 L16.5 891.5 L20.0 887.5 L21.0 889.5 L17.0 894Z" fill="#d03020"/><path d="M6.0 890 L17.0 894 L16.5 895 L6.0 891.4Z" fill="#30a850"/><path d="M6.5 918.5 L10.0 913.5 H12.5 V915.5 H15.0 V913.5 H17.5 L20.0 917.5 L16.5 921.5Z" fill="#f0e060"/><path d="M6.0 920 L6.5 918.5 L16.5 921.5 L20.0 917.5 L21.0 919.5 L17.0 924Z" fill="#f08080"/><path d="M6.0 920 L17.0 924 L16.5 925 L6.0 921.4Z" fill="#80e890"/></svg>
<!-- parts.thumb -->
<svg style="left:120px;top:240px" width="120" height="86" viewBox="0 0 1436 1029"><defs><filter id="tb"><feGaussianBlur stdDeviation="10"/></filter></defs><polygon points="125,745 190,670 215,590 235,365 255,330 445,90 570,105 575,180 560,240 755,290 840,185 980,210 1010,245 1050,410 1065,450 1110,490 1255,535 925,965 700,905" fill="#0000a4" stroke="#000018" stroke-width="11" stroke-linejoin="round"/><polygon points="445,90 570,105 385,340 255,330" fill="#0000a0" stroke="#000018" stroke-width="11" stroke-linejoin="round"/><polygon points="570,105 575,180 560,240 480,350 385,340" fill="#000088" stroke="#000018" stroke-width="11" stroke-linejoin="round"/><polygon points="560,240 755,290 660,410 480,350" fill="#0000a8" stroke="#000018" stroke-width="11" stroke-linejoin="round"/><polygon points="755,290 840,185 980,210 810,455 700,470 660,410" fill="#0000a0" stroke="#000018" stroke-width="11" stroke-linejoin="round"/><polygon points="235,390 700,495 720,700 215,595" fill="#0000aa" stroke="#000018" stroke-width="11" stroke-linejoin="round"/><polygon points="830,480 1000,245 1050,410 1065,450 860,685" fill="#00008c" stroke="#000018" stroke-width="11" stroke-linejoin="round"/><polygon points="240,360 700,468 810,452 988,225 1003,245 830,482 702,497 238,388" fill="#c8520e" stroke="#000018" stroke-width="5"/><polygon points="215,595 720,700 700,812 190,680" fill="#b4b412" stroke="#000018" stroke-width="11" stroke-linejoin="round"/><polygon points="705,497 812,482 842,692 737,712" fill="#c4c418" stroke="#000018" stroke-width="11" stroke-linejoin="round"/><polygon points="745,510 790,505 812,690 775,700" fill="#e8e840" fill-opacity=".7"/><polygon points="860,685 1062,455 1120,495 930,745" fill="#9a9a10" stroke="#000018" stroke-width="11" stroke-linejoin="round"/><path d="M737,712 L842,692 L912,770 Q880,815 800,820 L705,812 Z" fill="#b8b818" stroke="#000018" stroke-width="11" stroke-linejoin="round"/><ellipse cx="785" cy="755" rx="38" ry="30" fill="#ffffa0" fill-opacity=".85" filter="url(#tb)"/><path d="M760 800 Q830 800 880 770" stroke="#d07020" stroke-width="10" fill="none" stroke-opacity=".6"/><path d="M190,680 L700,812 L800,820 M930,745 L1110,490" fill="none" stroke="#000018" stroke-width="11" stroke-linejoin="round"/><path d="M925 745 V960" stroke="#1010ff" stroke-width="9"/><path d="M690 905 L920 952" stroke="#10e020" stroke-width="9"/><path d="M928 962 L1040 830" stroke="#f01010" stroke-width="8" stroke-dasharray="40 14"/></svg>
</body></html>
